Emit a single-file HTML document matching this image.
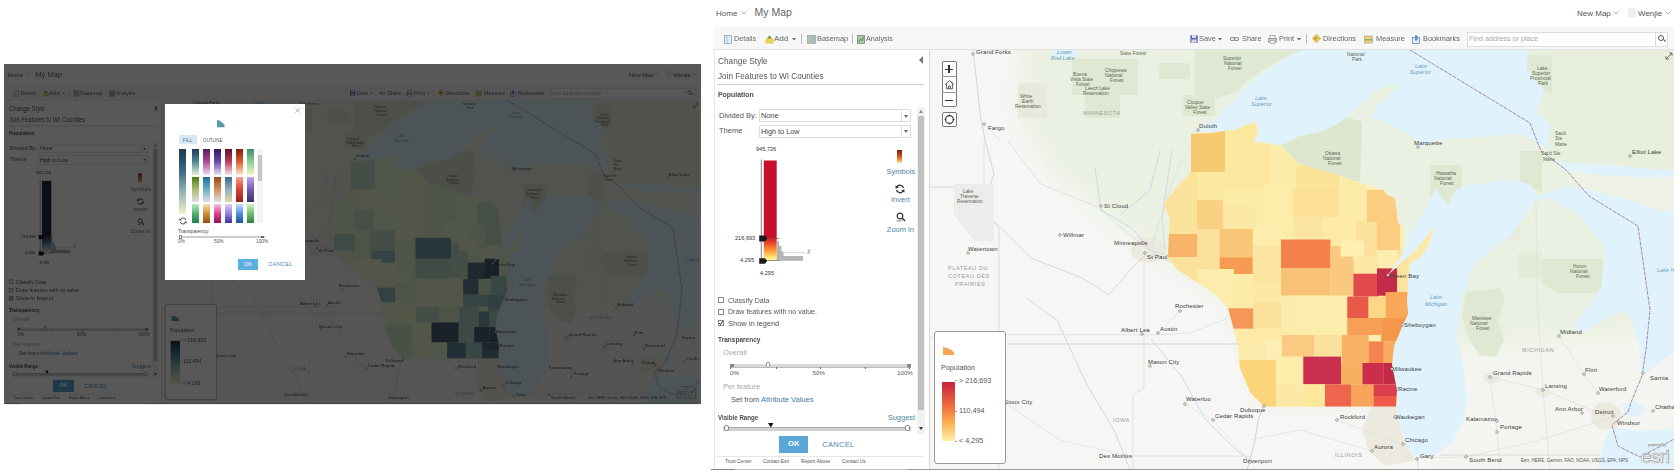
<!DOCTYPE html>
<html><head><meta charset="utf-8"><style>
html,body{margin:0;padding:0;background:#fff}
body{width:1680px;height:475px;position:relative;overflow:hidden;font-family:'Liberation Sans', sans-serif}
</style></head><body>
<div style="position:absolute;left:714px;top:0;width:960px;height:470px">
<div style="position:absolute;left:0;top:0;width:960px;height:470px;background:#fff;overflow:hidden">
<div style="position:absolute;left:2px;top:9.50px;font-size:8px;line-height:8px;color:#555;font-weight:normal;white-space:nowrap;">Home</div>
<svg style="position:absolute;left:26.5px;top:11px" width="6" height="4"><polyline points="0.5,0.5 3,3 5.5,0.5" fill="none" stroke="#999" stroke-width="0.8"/></svg>
<div style="position:absolute;left:40.5px;top:7.38px;font-size:10.5px;line-height:10.5px;color:#666;font-weight:normal;white-space:nowrap;">My Map</div>
<div style="position:absolute;left:863px;top:9.50px;font-size:8px;line-height:8px;color:#555;font-weight:normal;white-space:nowrap;">New Map</div>
<svg style="position:absolute;left:899px;top:11px" width="6" height="4"><polyline points="0.5,0.5 3,3 5.5,0.5" fill="none" stroke="#999" stroke-width="0.8"/></svg>
<div style="position:absolute;left:914px;top:8px;width:7.5px;height:9px;background:#eeeeee"></div>
<div style="position:absolute;left:924px;top:9.50px;font-size:8px;line-height:8px;color:#555;font-weight:normal;white-space:nowrap;">Wenjie</div>
<svg style="position:absolute;left:951px;top:11px" width="6" height="4"><polyline points="0.5,0.5 3,3 5.5,0.5" fill="none" stroke="#999" stroke-width="0.8"/></svg>
<div style="position:absolute;left:0;top:27px;width:960px;height:23px;background:#f7f7f7;border-bottom:1px solid #e2e2e2;box-sizing:border-box"></div>
<svg style="position:absolute;left:10px;top:34.5px" width="8" height="9" viewBox="0 0 8 9"><rect x="0.5" y="0.5" width="7" height="8" fill="#e3edf3" stroke="#8fa6b8" stroke-width="0.8"/><line x1="3" y1="1" x2="3" y2="8" stroke="#8fa6b8" stroke-width="0.6"/></svg>
<div style="position:absolute;left:20px;top:34.90px;font-size:8px;line-height:8px;color:#666;font-weight:normal;white-space:nowrap;transform:scaleX(0.9);transform-origin:0 0;">Details</div>
<svg style="position:absolute;left:51px;top:34.5px" width="9" height="9" viewBox="0 0 9 9"><rect x="0.5" y="3.5" width="8" height="5" fill="#e6d44e"/><polygon points="4.5,0.5 7,3.5 2,3.5" fill="#6a8a3a"/></svg>
<div style="position:absolute;left:60px;top:34.90px;font-size:8px;line-height:8px;color:#666;font-weight:normal;white-space:nowrap;">Add</div>
<svg style="position:absolute;left:78px;top:38px" width="5" height="3" viewBox="0 0 5 3"><polygon points="0,0 4,0 2,2.5" fill="#666"/></svg>
<div style="position:absolute;left:87px;top:34px;width:1px;height:10px;background:#bbb;border:none;box-sizing:border-box"></div>
<svg style="position:absolute;left:93px;top:34.5px" width="9" height="9" viewBox="0 0 9 9"><rect x="0.5" y="0.5" width="3.5" height="8" fill="#b8c4a8" stroke="#8a9488" stroke-width="0.6"/><rect x="5" y="0.5" width="3.5" height="8" fill="#aebccc" stroke="#8a9488" stroke-width="0.6"/></svg>
<div style="position:absolute;left:103px;top:34.90px;font-size:8px;line-height:8px;color:#666;font-weight:normal;white-space:nowrap;transform:scaleX(0.92);transform-origin:0 0;">Basemap</div>
<div style="position:absolute;left:138px;top:34px;width:1px;height:10px;background:#bbb;border:none;box-sizing:border-box"></div>
<svg style="position:absolute;left:143px;top:34.5px" width="8" height="9" viewBox="0 0 8 9"><rect x="0.5" y="0.5" width="7" height="8" fill="#a8cc98" stroke="#778" stroke-width="0.7"/><polyline points="1.5,7 3.5,4 5,5.5 7,2" fill="none" stroke="#3a6a9a" stroke-width="0.8"/></svg>
<div style="position:absolute;left:152px;top:34.90px;font-size:8px;line-height:8px;color:#666;font-weight:normal;white-space:nowrap;transform:scaleX(0.9);transform-origin:0 0;">Analysis</div>
<svg style="position:absolute;left:475.5px;top:35px" width="8" height="8" viewBox="0 0 8 8"><rect x="0.3" y="0.3" width="7.4" height="7.4" fill="#6468b0"/><rect x="2" y="0.3" width="4" height="2.5" fill="#e8e8f4"/><rect x="1.5" y="4.5" width="5" height="3" fill="#d8d8ea"/></svg>
<div style="position:absolute;left:485px;top:34.90px;font-size:8px;line-height:8px;color:#666;font-weight:normal;white-space:nowrap;transform:scaleX(0.92);transform-origin:0 0;">Save</div>
<svg style="position:absolute;left:503.5px;top:38px" width="5" height="3" viewBox="0 0 5 3"><polygon points="0,0 4,0 2,2.5" fill="#666"/></svg>
<svg style="position:absolute;left:516px;top:37px" width="9" height="4" viewBox="0 0 9 4"><rect x="0.4" y="0.4" width="4.5" height="3.2" rx="1.5" fill="none" stroke="#777" stroke-width="0.9"/><rect x="4" y="0.4" width="4.5" height="3.2" rx="1.5" fill="none" stroke="#777" stroke-width="0.9"/></svg>
<div style="position:absolute;left:528px;top:34.90px;font-size:8px;line-height:8px;color:#666;font-weight:normal;white-space:nowrap;transform:scaleX(0.92);transform-origin:0 0;">Share</div>
<svg style="position:absolute;left:554px;top:34.5px" width="9" height="9" viewBox="0 0 9 9"><rect x="2" y="0.5" width="5" height="3" fill="#fff" stroke="#888" stroke-width="0.7"/><rect x="0.5" y="3.5" width="8" height="3.5" fill="#ccc" stroke="#888" stroke-width="0.7"/><rect x="2" y="6" width="5" height="2.5" fill="#fff" stroke="#888" stroke-width="0.6"/></svg>
<div style="position:absolute;left:565px;top:34.90px;font-size:8px;line-height:8px;color:#666;font-weight:normal;white-space:nowrap;transform:scaleX(0.92);transform-origin:0 0;">Print</div>
<svg style="position:absolute;left:583px;top:38px" width="5" height="3" viewBox="0 0 5 3"><polygon points="0,0 4,0 2,2.5" fill="#666"/></svg>
<div style="position:absolute;left:592px;top:34px;width:1px;height:10px;background:#bbb;border:none;box-sizing:border-box"></div>
<svg style="position:absolute;left:598px;top:34px" width="9" height="9" viewBox="0 0 9 9"><polygon points="4.5,0.3 8.7,4.5 4.5,8.7 0.3,4.5" fill="#e8c84a" stroke="#b89a2a" stroke-width="0.5"/><polyline points="3,5.5 3,4 5.5,4" fill="none" stroke="#6a5a1a" stroke-width="0.7"/></svg>
<div style="position:absolute;left:609px;top:34.90px;font-size:8px;line-height:8px;color:#666;font-weight:normal;white-space:nowrap;transform:scaleX(0.93);transform-origin:0 0;">Directions</div>
<svg style="position:absolute;left:650px;top:34.5px" width="9" height="9" viewBox="0 0 9 9"><rect x="0.5" y="1" width="8" height="7" fill="#e8d08a" stroke="#b89a5a" stroke-width="0.6"/><rect x="0.5" y="4" width="8" height="1.5" fill="#8ab86a"/></svg>
<div style="position:absolute;left:662px;top:34.90px;font-size:8px;line-height:8px;color:#666;font-weight:normal;white-space:nowrap;transform:scaleX(0.93);transform-origin:0 0;">Measure</div>
<svg style="position:absolute;left:698px;top:34.5px" width="8" height="9" viewBox="0 0 8 9"><rect x="0.5" y="2.5" width="7" height="6" fill="#e8f0f8" stroke="#5a8ac0" stroke-width="0.8"/><rect x="3" y="0.5" width="2.5" height="5" fill="#5a8ac0"/></svg>
<div style="position:absolute;left:709px;top:34.90px;font-size:8px;line-height:8px;color:#666;font-weight:normal;white-space:nowrap;transform:scaleX(0.92);transform-origin:0 0;">Bookmarks</div>
<div style="position:absolute;left:753px;top:31.5px;width:201px;height:15px;background:#fff;border:1px solid #ddd;box-sizing:border-box"></div>
<div style="position:absolute;left:941px;top:31.5px;width:1px;height:15px;background:#ddd"></div>
<div style="position:absolute;left:755px;top:35.38px;font-size:7.2px;line-height:7.2px;color:#aaa;font-weight:normal;white-space:nowrap;">Find address or place</div>
<div style="position:absolute;left:944px;top:34.5px;width:6px;height:6px;border:1px solid #555;border-radius:50%;box-sizing:border-box"></div>
<div style="position:absolute;left:948.5px;top:40px;width:3px;height:1px;background:#555;transform:rotate(45deg)"></div>
<svg width="744" height="419" viewBox="930 50 744 419" style="position:absolute;left:216px;top:50px;display:block">
<defs><clipPath id="wiR"><polygon points="1191.0,134.0 1210.0,133.0 1224.0,131.0 1235.0,130.0 1244.0,126.0 1255.0,122.0 1258.0,130.0 1254.0,142.0 1264.0,143.0 1277.0,145.0 1281.0,146.0 1299.0,164.0 1326.0,171.0 1354.0,181.0 1383.0,190.0 1387.0,195.0 1395.0,198.0 1398.0,223.0 1403.0,226.0 1404.0,248.0 1400.0,258.0 1393.0,268.0 1388.0,275.0 1403.0,261.0 1415.0,251.0 1431.0,231.0 1434.0,226.0 1428.0,246.0 1421.0,256.0 1410.0,263.0 1408.0,281.0 1407.0,300.0 1408.0,314.0 1402.0,327.0 1394.0,346.0 1392.0,365.0 1397.0,390.0 1396.0,406.5 1264.0,406.5 1250.0,392.0 1240.0,368.0 1238.0,345.0 1234.0,330.0 1228.0,308.0 1217.0,296.0 1205.0,287.0 1189.0,277.0 1178.0,270.0 1168.0,258.0 1169.0,235.0 1170.0,220.0 1164.0,204.0 1176.0,188.0 1191.0,172.0"/></clipPath></defs>
<filter id="blR" x="-20%" y="-20%" width="140%" height="140%"><feGaussianBlur stdDeviation="10"/></filter>
<rect x="900" y="30" width="800" height="470" fill="#ebf1e2"/>
<polygon fill="#e7eedb" filter="url(#blR)" points="1530.0,40.0 1700.0,40.0 1700.0,172.0 1560.0,165.0 1550.0,145.0 1545.0,95.0 1530.0,70.0"/>
<polygon fill="#f6f6f4" filter="url(#blR)" points="880.0,20.0 1025.0,20.0 1015.0,110.0 1050.0,170.0 1110.0,220.0 1165.0,262.0 1230.0,300.0 1260.0,400.0 1440.0,410.0 1440.0,520.0 880.0,520.0"/>
<polygon fill="#f4f5f0" filter="url(#blR)" points="1430.0,350.0 1700.0,330.0 1700.0,520.0 1430.0,520.0"/>
<polygon fill="#dfe8d2" points="1195.0,50.0 1303.0,50.0 1285.0,57.0 1265.0,69.0 1248.0,80.0 1236.0,92.0 1215.0,99.0 1195.0,99.0"/>
<polygon fill="#dfe8d2" points="1159.0,63.0 1190.0,63.0 1190.0,79.0 1159.0,79.0"/>
<polygon fill="#dfe8d2" points="1072.0,59.0 1138.0,59.0 1138.0,95.0 1120.0,95.0 1120.0,118.0 1085.0,118.0 1085.0,95.0 1072.0,95.0"/>
<polygon fill="#e6e9dc" points="1018.0,83.0 1047.0,83.0 1047.0,118.0 1018.0,118.0"/>
<polygon fill="#dfe8d2" points="1183.0,95.0 1215.0,95.0 1215.0,116.0 1183.0,116.0"/>
<polygon fill="#d5e2c2" points="1333.0,50.0 1358.0,50.0 1356.0,56.0 1335.0,56.0"/>
<polygon fill="#dde6cf" points="1281.0,146.0 1290.0,140.0 1307.0,131.0 1331.0,120.0 1347.0,117.0 1362.0,122.0 1360.0,181.0 1354.0,181.0 1326.0,171.0 1299.0,164.0"/>
<polygon fill="#dfe8d2" points="1520.0,151.0 1542.0,151.0 1542.0,192.0 1520.0,185.0"/>
<polygon fill="#dfe8d2" points="1430.0,165.0 1462.0,165.0 1462.0,197.0 1448.0,205.0 1430.0,198.0"/>
<polygon fill="#dfe8d2" points="1527.0,55.0 1552.0,55.0 1552.0,95.0 1544.0,90.0 1527.0,70.0"/>
<polygon fill="#dfe8d2" points="1466.0,292.0 1500.0,288.0 1505.0,300.0 1498.0,320.0 1504.0,340.0 1496.0,357.0 1480.0,355.0 1468.0,338.0 1462.0,315.0"/>
<polygon fill="#e4ebd9" points="1518.0,253.0 1542.0,253.0 1542.0,278.0 1518.0,278.0"/>
<polygon fill="#dfe8d2" points="1542.0,259.0 1603.0,259.0 1603.0,293.0 1560.0,293.0 1542.0,285.0"/>
<polygon fill="#e8ecdf" points="1500.0,215.0 1520.0,215.0 1520.0,240.0 1500.0,240.0"/>
<ellipse cx="1148" cy="250" rx="17" ry="13" fill="#ece9df"/>
<polygon fill="#ece9df" points="1372.0,406.0 1397.0,406.0 1397.0,414.0 1401.0,431.0 1408.0,448.0 1416.0,460.0 1385.0,466.0 1368.0,450.0 1362.0,428.0"/>
<ellipse cx="1606" cy="416" rx="15" ry="14" fill="#ece9df"/>
<ellipse cx="1492" cy="378" rx="8" ry="6" fill="#ebeadf"/>
<ellipse cx="1543" cy="392" rx="8" ry="5" fill="#ebeadf"/>
<polyline fill="none" stroke="#cdcdcd" stroke-width="0.8" points="1000.0,344.0 1240.0,344.0"/>
<polyline fill="none" stroke="#cdcdcd" stroke-width="0.7" points="930.0,187.0 994.0,187.0"/>
<polyline fill="none" stroke="#d6d6d6" stroke-width="0.6" points="984.0,140.0 984.0,187.0"/>
<polyline fill="none" stroke="#d2d2d2" stroke-width="0.7" points="999.0,229.0 999.0,470.0"/>
<polyline fill="none" stroke="#dcdcdc" stroke-width="0.7" points="1000.0,334.7 1160.0,334.7 1190.0,333.0 1228.0,318.0"/>
<polyline fill="none" stroke="#cdcdcd" stroke-width="0.8" points="973.0,50.0 981.0,120.0 986.0,144.0 994.0,174.0 982.0,207.0 999.0,229.0"/>
<polyline fill="none" stroke="#dcdcdc" stroke-width="0.8" points="1007.0,140.0 1041.0,184.0 1098.0,207.0 1104.0,212.0 1130.0,235.0 1150.0,250.0 1220.0,270.0 1280.0,320.0 1340.0,370.0 1392.0,369.0"/>
<polyline fill="none" stroke="#dcdcdc" stroke-width="0.8" points="1144.0,260.0 1144.0,388.0 1133.0,395.0 1133.0,470.0"/>
<polyline fill="none" stroke="#dcdcdc" stroke-width="0.7" points="1198.0,130.0 1175.0,175.0 1160.0,220.0 1150.0,250.0"/>
<polyline fill="none" stroke="#dcdcdc" stroke-width="0.7" points="1130.0,456.0 1250.0,456.0"/>
<polyline fill="none" stroke="#c8c8c8" stroke-width="0.8" points="1264.0,406.0 1258.0,420.0 1255.0,440.0 1250.0,460.0 1247.0,470.0"/>
<polyline fill="none" stroke="#cccccc" stroke-width="0.7" points="1418.0,458.0 1418.0,470.0"/>
<polyline fill="none" stroke="#cccccc" stroke-width="0.7" points="1440.0,455.0 1600.0,455.0"/>
<polyline fill="none" stroke="#dcdcdc" stroke-width="0.7" points="1337.0,420.0 1400.0,444.0"/>
<polyline fill="none" stroke="#dcdcdc" stroke-width="0.7" points="1250.0,440.0 1300.0,430.0 1372.0,451.0"/>
<polyline fill="none" stroke="#dcdcdc" stroke-width="0.7" points="1416.0,458.0 1466.0,457.0 1540.0,440.0 1610.0,418.0"/>
<polyline fill="none" stroke="#dcdcdc" stroke-width="0.7" points="1490.0,377.0 1543.0,390.0 1606.0,416.0"/>
<polyline fill="none" stroke="#dcdcdc" stroke-width="0.6" points="984.0,124.0 1000.0,140.0"/>
<polyline fill="none" stroke="#dcdcdc" stroke-width="0.6" points="1004.0,402.0 1060.0,440.0 1128.0,456.0"/>
<polyline fill="none" stroke="#dcdcdc" stroke-width="0.6" points="1185.0,404.0 1213.0,420.0 1250.0,462.0"/>
<polyline fill="none" stroke="#dcdcdc" stroke-width="0.6" points="1536.0,199.0 1537.0,300.0 1543.0,390.0 1550.0,470.0"/>
<polyline fill="none" stroke="#dcdcdc" stroke-width="0.6" points="1490.0,377.0 1497.0,432.0 1500.0,470.0"/>
<polyline fill="none" stroke="#dcdcdc" stroke-width="0.6" points="1559.0,336.0 1584.0,374.0 1598.0,393.0"/>
<polyline fill="none" stroke="#dcdcdc" stroke-width="0.6" points="1180.0,311.0 1158.0,333.0"/>
<polyline fill="none" stroke="#dcdcdc" stroke-width="0.6" points="930.0,337.0 1000.0,334.7"/>
<polyline fill="none" stroke="#b3d3e8" stroke-width="0.7" points="984.0,211.0 1031.0,258.0 1082.0,278.0 1109.0,295.0 1130.0,270.0 1145.0,255.0"/>
<polyline fill="none" stroke="#b3d3e8" stroke-width="0.7" points="1095.0,167.0 1101.0,210.0 1132.0,228.0 1150.0,250.0 1170.0,262.0"/>
<polyline fill="none" stroke="#b3d3e8" stroke-width="0.7" points="1026.0,298.0 1057.0,320.0 1087.0,385.0 1114.0,430.0 1125.0,457.0 1130.0,470.0"/>
<polyline fill="none" stroke="#b3d3e8" stroke-width="0.7" points="1151.0,339.0 1182.0,377.0 1205.0,419.0 1235.0,449.0 1250.0,460.0"/>
<polyline fill="none" stroke="#b3d3e8" stroke-width="0.7" points="1172.0,150.0 1162.0,217.0 1165.0,250.0"/>
<polyline fill="none" stroke="#b3d3e8" stroke-width="0.7" points="1160.0,150.0 1150.0,190.0 1120.0,215.0"/>
<polygon fill="#ececea" points="954.0,184.0 994.0,184.0 994.0,241.0 975.0,241.0 954.0,215.0"/>
<polygon fill="#e0f3fd" points="1199.0,128.0 1212.0,121.0 1222.0,112.0 1238.0,96.0 1252.0,81.0 1272.0,67.0 1290.0,56.0 1305.0,49.0 1528.0,49.0 1527.0,70.0 1544.0,90.0 1536.0,112.0 1552.0,126.0 1547.0,140.0 1553.0,150.0 1541.0,145.0 1522.0,134.0 1500.0,135.0 1470.0,138.0 1440.0,140.0 1422.0,147.0 1413.0,137.0 1395.0,127.0 1380.0,120.0 1369.0,117.0 1380.0,103.0 1391.0,94.0 1399.0,85.0 1388.0,86.0 1374.0,92.0 1360.0,105.0 1347.0,117.0 1335.0,125.0 1324.0,131.0 1310.0,134.0 1297.0,137.0 1287.0,143.0 1277.0,145.0 1264.0,143.0 1254.0,142.0 1258.0,130.0 1255.0,122.0 1244.0,126.0 1235.0,130.0 1224.0,131.0 1210.0,133.0"/>
<polygon fill="#e0f3fd" points="1537.0,197.0 1531.0,185.0 1518.0,181.0 1506.0,179.0 1480.0,184.0 1466.0,185.0 1456.0,190.0 1448.0,205.0 1443.0,200.0 1436.0,188.0 1431.0,198.0 1423.0,213.0 1410.0,233.0 1404.0,248.0 1400.0,258.0 1393.0,268.0 1388.0,275.0 1403.0,261.0 1415.0,251.0 1431.0,231.0 1434.0,226.0 1428.0,246.0 1421.0,256.0 1410.0,263.0 1408.0,281.0 1407.0,300.0 1408.0,314.0 1402.0,327.0 1394.0,346.0 1392.0,365.0 1397.0,390.0 1396.0,406.0 1397.0,414.0 1401.0,431.0 1408.0,448.0 1416.0,458.0 1436.0,455.0 1452.0,442.0 1464.0,420.0 1467.0,400.0 1464.0,371.0 1457.0,336.0 1459.0,315.0 1462.0,300.0 1467.0,287.0 1471.0,272.0 1476.0,263.0 1491.0,250.0 1508.0,238.0 1522.0,220.0 1532.0,205.0"/>
<polygon fill="#e0f3fd" points="1527.0,202.0 1536.0,196.0 1550.0,192.0 1565.0,186.0 1580.0,188.0 1600.0,193.0 1630.0,200.0 1660.0,210.0 1680.0,212.0 1680.0,352.0 1674.0,352.0 1642.0,376.0 1639.0,344.0 1632.0,320.0 1625.0,310.0 1608.0,317.0 1588.0,330.0 1574.0,330.0 1576.0,322.0 1588.0,308.0 1601.0,288.0 1605.0,259.0 1603.0,245.0 1596.0,237.0 1578.0,214.0 1548.0,198.0"/>
<polygon fill="#e0f3fd" points="1553.0,152.0 1558.0,160.0 1567.0,163.0 1612.0,165.0 1659.0,170.0 1680.0,171.0 1680.0,178.0 1640.0,178.0 1600.0,176.0 1575.0,172.0 1562.0,168.0"/>
<polygon fill="#e0f3fd" points="1598.0,470.0 1603.0,443.0 1613.0,427.0 1637.0,431.0 1671.0,429.0 1680.0,428.0 1680.0,470.0"/>
<polygon fill="#e0f3fd" points="1623.0,404.0 1633.0,401.0 1643.0,405.0 1644.0,413.0 1634.0,417.0 1624.0,414.0"/>
<polygon fill="#e0f3fd" points="1051.0,49.0 1078.0,49.0 1077.0,56.0 1060.0,58.0 1052.0,55.0"/>
<polygon fill="#eef2e6" points="1572.0,171.0 1600.0,175.0 1640.0,177.0 1680.0,177.0 1680.0,212.0 1660.0,210.0 1630.0,200.0 1600.0,193.0 1580.0,188.0 1565.0,180.0"/>
<g clip-path="url(#wiR)">
<rect x="1150" y="110" width="300" height="310" fill="#fdedae"/>
<rect x="1160" y="120" width="65.0" height="52.0" fill="#f7ca72"/>
<rect x="1225" y="110" width="45.0" height="80.0" fill="#fce89f"/>
<rect x="1270" y="130" width="26.0" height="60.0" fill="#fcecaa"/>
<rect x="1296" y="130" width="34.0" height="38.0" fill="#fceaa6"/>
<rect x="1296" y="166" width="44.0" height="24.0" fill="#fce39a"/>
<rect x="1160" y="172" width="37.0" height="62.0" fill="#fbe39c"/>
<rect x="1197" y="172" width="28.0" height="28.0" fill="#fce9a2"/>
<rect x="1225" y="190" width="39.0" height="38.0" fill="#fdeba8"/>
<rect x="1264" y="185" width="32.0" height="37.0" fill="#fdedab"/>
<rect x="1293" y="188" width="46.0" height="29.0" fill="#fce098"/>
<rect x="1339" y="180" width="28.0" height="45.0" fill="#fceaa8"/>
<rect x="1367" y="190" width="33.0" height="60.0" fill="#facd80"/>
<rect x="1197" y="200" width="26.0" height="29.0" fill="#fad182"/>
<rect x="1223" y="205" width="32.0" height="24.0" fill="#fce8a5"/>
<rect x="1255" y="222" width="38.0" height="20.0" fill="#fdecab"/>
<rect x="1293" y="217" width="29.0" height="23.0" fill="#fce5a3"/>
<rect x="1322" y="217" width="18.0" height="29.0" fill="#fdeaa9"/>
<rect x="1340" y="225" width="16.0" height="16.0" fill="#fdeaa9"/>
<rect x="1356" y="222" width="21.0" height="46.0" fill="#fce19c"/>
<rect x="1160" y="234" width="9.0" height="26.0" fill="#fce19b"/>
<rect x="1168" y="234" width="29.0" height="23.0" fill="#f8b468"/>
<rect x="1160" y="257" width="40.0" height="33.0" fill="#fce19b"/>
<rect x="1197" y="229" width="23.0" height="40.0" fill="#fce19c"/>
<rect x="1219.7" y="228.8" width="33.1" height="28.4" fill="#fac77a"/>
<rect x="1219.7" y="257.2" width="33.1" height="16.8" fill="#f69c52"/>
<rect x="1197" y="269" width="37.0" height="41.0" fill="#fdedac"/>
<rect x="1234" y="274" width="19.0" height="34.0" fill="#fdeba8"/>
<rect x="1252.8" y="245.8" width="28.2" height="39.8" fill="#fce4a1"/>
<rect x="1253" y="285.6" width="28.0" height="16.4" fill="#fde8a8"/>
<rect x="1281" y="239.5" width="49.5" height="28.9" fill="#f4804c"/>
<rect x="1281" y="268.4" width="49.5" height="27.3" fill="#f9c175"/>
<rect x="1330.5" y="246" width="23.2" height="49.7" fill="#fac97f"/>
<rect x="1340.5" y="240.8" width="23.5" height="15.8" fill="#fdf0b1"/>
<rect x="1353.7" y="256.6" width="24.8" height="17.4" fill="#fce8a6"/>
<rect x="1353.4" y="273.7" width="25.1" height="22.9" fill="#e04a4c"/>
<rect x="1377" y="268.4" width="20.3" height="27.3" fill="#c42b4a"/>
<rect x="1397" y="250" width="43.0" height="50.0" fill="#fce39e"/>
<rect x="1408" y="222" width="32.0" height="48.0" fill="#fce9a8"/>
<rect x="1228" y="308.3" width="25.3" height="20.5" fill="#f6975a"/>
<rect x="1253.3" y="302" width="27.7" height="26.8" fill="#fce19d"/>
<rect x="1281" y="295.7" width="18.8" height="39.3" fill="#fcecab"/>
<rect x="1299.8" y="295.7" width="47.4" height="39.3" fill="#fdedac"/>
<rect x="1347.2" y="296.6" width="21.4" height="21.4" fill="#e85a48"/>
<rect x="1368.6" y="296.6" width="17.0" height="21.4" fill="#fbd888"/>
<rect x="1385.6" y="292" width="34.4" height="26.0" fill="#f8a858"/>
<rect x="1347.2" y="318" width="34.0" height="17.0" fill="#f5a055"/>
<rect x="1381.2" y="318" width="38.8" height="23.4" fill="#f5964b"/>
<rect x="1220" y="328.8" width="45.8" height="17.0" fill="#fde9a8"/>
<rect x="1265.8" y="328.8" width="16.1" height="11.7" fill="#fde9a8"/>
<rect x="1265.8" y="340.5" width="16.1" height="19.5" fill="#fdefb4"/>
<rect x="1281.9" y="335" width="32.1" height="21.6" fill="#faca82"/>
<rect x="1314" y="335" width="27.8" height="21.6" fill="#fce19c"/>
<rect x="1341.8" y="335" width="26.8" height="28.0" fill="#f9b265"/>
<rect x="1368.6" y="341.4" width="15.2" height="21.6" fill="#f6844f"/>
<rect x="1383.8" y="341.4" width="36.2" height="21.6" fill="#f9ac5f"/>
<rect x="1220" y="345.8" width="45.8" height="26.2" fill="#fdebab"/>
<rect x="1220" y="360" width="56.0" height="50.0" fill="#fcd47a"/>
<rect x="1276" y="356.6" width="27.3" height="28.4" fill="#fdecaa"/>
<rect x="1276" y="385" width="27.0" height="25.0" fill="#fce9a8"/>
<rect x="1303.3" y="356.6" width="37.7" height="27.7" fill="#c8304d"/>
<rect x="1303" y="384.3" width="22.0" height="25.7" fill="#fce79d"/>
<rect x="1325" y="384.3" width="26.0" height="25.7" fill="#ee644c"/>
<rect x="1341" y="363" width="21.4" height="21.3" fill="#f8b060"/>
<rect x="1351" y="384.3" width="22.5" height="25.7" fill="#f8a45a"/>
<rect x="1362.4" y="363" width="21.4" height="21.3" fill="#c92f4a"/>
<rect x="1383.8" y="363" width="36.2" height="21.3" fill="#c42a48"/>
<rect x="1373.5" y="384.3" width="46.5" height="11.7" fill="#dc3e4e"/>
<rect x="1373.5" y="396" width="46.5" height="14.0" fill="#f05a48"/>
</g>
<polyline fill="none" stroke="#a487b0" stroke-width="1" stroke-dasharray="4,1" points="1410.0,50.0 1530.0,123.0 1541.0,151.0 1566.0,170.0 1589.0,196.0 1638.0,226.0 1650.0,310.0 1646.0,350.0 1642.0,376.0 1632.0,400.0 1628.0,412.0 1612.0,425.0 1618.0,446.0 1640.0,457.0 1680.0,436.0"/>
<g font-family="Liberation Sans, sans-serif" font-size="6" fill="#3a3a3a" letter-spacing="0.15">
<text x="976" y="54">Grand Forks</text>
<text x="988" y="130">Fargo</text>
<text x="1104" y="208">St Cloud</text>
<text x="1063" y="237">Willmar</text>
<text x="1114" y="245">Minneapolis</text>
<text x="1147" y="259">St Paul</text>
<text x="968" y="251">Watertown</text>
<text x="1175" y="308">Rochester</text>
<text x="1121" y="332">Albert Lea</text>
<text x="1160" y="331">Austin</text>
<text x="1148" y="364">Mason City</text>
<text x="1004" y="404">Sioux City</text>
<text x="1186" y="401">Waterloo</text>
<text x="1099" y="458">Des Moines</text>
<text x="1215" y="418">Cedar Rapids</text>
<text x="1240" y="412">Dubuque</text>
<text x="1243" y="463">Davenport</text>
<text x="1199" y="128">Duluth</text>
<text x="1414" y="145">Marquette</text>
<text x="1632" y="154">Elliot Lake</text>
<text x="1404" y="327">Sheboygan</text>
<text x="1392" y="371">Milwaukee</text>
<text x="1398" y="391">Racine</text>
<text x="1395" y="419">Waukegan</text>
<text x="1405" y="442">Chicago</text>
<text x="1420" y="458">Gary</text>
<text x="1469" y="462">South Bend</text>
<text x="1374" y="449">Aurora</text>
<text x="1340" y="419">Rockford</text>
<text x="1560" y="334">Midland</text>
<text x="1493" y="375">Grand Rapids</text>
<text x="1585" y="372">Flint</text>
<text x="1545" y="388">Lansing</text>
<text x="1599" y="391">Waterford</text>
<text x="1555" y="411">Ann Arbor</text>
<text x="1595" y="414">Detroit</text>
<text x="1617" y="425">Windsor</text>
<text x="1466" y="421">Kalamazoo</text>
<text x="1500" y="429">Portage</text>
<text x="1650" y="380">Sarnia</text>
<text x="1655" y="409">Chatham</text>
<text x="1389" y="278">Green Bay</text>
</g>
<g fill="#fff" stroke="#666" stroke-width="0.6">
<circle cx="973" cy="54" r="1.3"/>
<circle cx="984" cy="124" r="1.3"/>
<circle cx="1101" cy="206" r="1.3"/>
<circle cx="1060" cy="235" r="1.3"/>
<circle cx="1143" cy="243" r="1.3"/>
<circle cx="1145" cy="253" r="1.3"/>
<circle cx="968" cy="253" r="1.3"/>
<circle cx="1180" cy="311" r="1.3"/>
<circle cx="1142" cy="334" r="1.3"/>
<circle cx="1158" cy="333" r="1.3"/>
<circle cx="1150" cy="366" r="1.3"/>
<circle cx="1001" cy="402" r="1.3"/>
<circle cx="1185" cy="404" r="1.3"/>
<circle cx="1126" cy="456" r="1.3"/>
<circle cx="1213" cy="420" r="1.3"/>
<circle cx="1264" cy="406" r="1.3"/>
<circle cx="1250" cy="462" r="1.3"/>
<circle cx="1198" cy="130" r="1.3"/>
<circle cx="1418" cy="147" r="1.3"/>
<circle cx="1630" cy="156" r="1.3"/>
<circle cx="1402" cy="325" r="1.3"/>
<circle cx="1392" cy="369" r="1.3"/>
<circle cx="1398" cy="389" r="1.3"/>
<circle cx="1395" cy="417" r="1.3"/>
<circle cx="1403" cy="444" r="1.3"/>
<circle cx="1417" cy="459" r="1.3"/>
<circle cx="1466" cy="457" r="1.3"/>
<circle cx="1372" cy="451" r="1.3"/>
<circle cx="1337" cy="420" r="1.3"/>
<circle cx="1559" cy="336" r="1.3"/>
<circle cx="1490" cy="377" r="1.3"/>
<circle cx="1584" cy="374" r="1.3"/>
<circle cx="1543" cy="390" r="1.3"/>
<circle cx="1598" cy="393" r="1.3"/>
<circle cx="1582" cy="413" r="1.3"/>
<circle cx="1613" cy="416" r="1.3"/>
<circle cx="1643" cy="373" r="1.3"/>
<circle cx="1497" cy="421" r="1.3"/>
<circle cx="1497" cy="432" r="1.3"/>
<circle cx="1653" cy="411" r="1.3"/>
<circle cx="1388" cy="275" r="1.3"/>
</g>
<g font-family="Liberation Sans, sans-serif" font-size="5.5" font-style="italic" fill="#6c9cc0">
<text x="1057" y="54">Lower</text>
<text x="1051" y="59.5">Red Lake</text>
<text x="1255" y="100">Lake</text>
<text x="1251" y="106">Superior</text>
<text x="1415" y="68">Lake</text>
<text x="1410" y="74">Superior</text>
<text x="1430" y="299">Lake</text>
<text x="1425" y="306">Michigan</text>
<text x="1657" y="272">Lake Hu</text>
</g>
<g font-family="Liberation Sans, sans-serif" font-size="4.8" fill="#5b6655">
<text x="1223" y="60">Superior</text>
<text x="1224" y="65">National</text>
<text x="1228" y="70">Forest</text>
<text x="1347" y="56">National</text>
<text x="1352" y="61">Park</text>
<text x="1187" y="104">Cloquet</text>
<text x="1185" y="109">Valley State</text>
<text x="1193" y="114">Forest</text>
<text x="1537" y="70">Lake</text>
<text x="1532" y="75">Superior</text>
<text x="1530" y="80">Provincial</text>
<text x="1538" y="85">Park</text>
<text x="1325" y="155">Ottawa</text>
<text x="1323" y="160">National</text>
<text x="1328" y="165">Forest</text>
<text x="1436" y="175">Hiawatha</text>
<text x="1434" y="180">National</text>
<text x="1440" y="185">Forest</text>
<text x="1573" y="268">Huron</text>
<text x="1570" y="273">National</text>
<text x="1576" y="278">Forest</text>
<text x="1472" y="320">Manistee</text>
<text x="1470" y="325">National</text>
<text x="1476" y="330">Forest</text>
<text x="1073" y="76">Buena</text>
<text x="1070" y="81">Vista State</text>
<text x="1076" y="86">Forest</text>
<text x="1105" y="72">Chippewa</text>
<text x="1105" y="77">National</text>
<text x="1110" y="82">Forest</text>
<text x="1085" y="90">Leech Lake</text>
<text x="1083" y="95">Reservation</text>
<text x="1020" y="98">White</text>
<text x="1022" y="103">Earth</text>
<text x="1015" y="108">Reservation</text>
<text x="963" y="193">Lake</text>
<text x="960" y="198">Traverse</text>
<text x="957" y="203">Reservation</text>
<text x="1120" y="55">State Forest</text>
<text x="1555" y="135">Sault</text>
<text x="1555" y="140">Ste</text>
<text x="1555" y="146">Marie</text>
<text x="1541" y="155">Sault Ste</text>
<text x="1543" y="161">Marie</text>
</g>
<g font-family="Liberation Sans, sans-serif" font-size="5.5" fill="#9a9a9a" letter-spacing="0.6">
<text x="1083" y="115">MINNESOTA</text>
<text x="1113" y="422">IOWA</text>
<text x="1335" y="457">ILLINOIS</text>
<text x="1522" y="352">MICHIGAN</text>
<text x="948" y="270">PLATEAU DU</text>
<text x="948" y="278">COTEAU DES</text>
<text x="955" y="286">PRAIRIES</text>
</g>
<text x="1521" y="462" font-family="Liberation Sans, sans-serif" font-size="4.6" fill="#555">Esri, HERE, Garmin, FAO, NOAA, USGS, EPA, NPS</text>
<text x="1640.5" y="462.5" font-family="Liberation Sans, sans-serif" font-size="19" fill="#555" opacity="0.55" transform="translate(0.8,0.8)" letter-spacing="-0.5">esri</text>
<text x="1640.5" y="462.5" font-family="Liberation Sans, sans-serif" font-size="19" fill="#fff" stroke="#888" stroke-width="0.4" letter-spacing="-0.5">esri</text>
<text x="1648" y="446" font-family="Liberation Sans, sans-serif" font-size="3.5" fill="#fff" stroke="#999" stroke-width="0.25">powered by</text>
</svg>
<svg style="position:absolute;left:951px;top:52px" width="8" height="8"><path d="M1 7 L7 1 M4 1 H7 V4 M1 4 V7 H4" fill="none" stroke="#555" stroke-width="0.8"/></svg>
<div style="position:absolute;left:0;top:50px;width:216px;height:419px;background:#fff;border-left:1px solid #e6e6e6;border-right:1px solid #d6d6d6;box-sizing:border-box"></div>
<div style="position:absolute;left:3.7000000000000455px;top:57.35px;font-size:9px;line-height:9px;color:#555;font-weight:normal;white-space:nowrap;transform:scaleX(0.92);transform-origin:0 0;">Change Style</div>
<div style="position:absolute;left:3.7000000000000455px;top:71.75px;font-size:9px;line-height:9px;color:#555;font-weight:normal;white-space:nowrap;transform:scaleX(0.91);transform-origin:0 0;">Join Features to WI Counties</div>
<svg style="position:absolute;left:205px;top:56px" width="5" height="8"><polygon points="4,0 0,4 4,8" fill="#777"/></svg>
<div style="position:absolute;left:3px;top:84px;width:207px;height:1px;background:#ccc"></div>
<div style="position:absolute;left:3.7000000000000455px;top:91.03px;font-size:7.5px;line-height:7.5px;color:#4a4a4a;font-weight:bold;white-space:nowrap;transform:scaleX(0.92);transform-origin:0 0;">Population</div>
<div style="position:absolute;left:5px;top:112.33px;font-size:7.5px;line-height:7.5px;color:#555;font-weight:normal;white-space:nowrap;">Divided By:</div>
<div style="position:absolute;left:5px;top:126.82px;font-size:7.5px;line-height:7.5px;color:#555;font-weight:normal;white-space:nowrap;">Theme</div>
<div style="position:absolute;left:45.39999999999998px;top:109px;width:152px;height:13px;border:1px solid #ddd;box-sizing:border-box;background:#fff"></div>
<div style="position:absolute;left:186.70000000000005px;top:110px;width:1px;height:11px;background:#e2e2e2"></div>
<div style="position:absolute;left:47px;top:112.39px;font-size:7.3px;line-height:7.3px;color:#444;font-weight:normal;white-space:nowrap;">None</div>
<svg style="position:absolute;left:190px;top:114.5px" width="5" height="3"><polygon points="0,0 4,0 2,3" fill="#666"/></svg>
<div style="position:absolute;left:45.39999999999998px;top:124.5px;width:152px;height:13px;border:1px solid #ddd;box-sizing:border-box;background:#fff"></div>
<div style="position:absolute;left:186.70000000000005px;top:125.5px;width:1px;height:11px;background:#e2e2e2"></div>
<div style="position:absolute;left:47px;top:127.89px;font-size:7.3px;line-height:7.3px;color:#444;font-weight:normal;white-space:nowrap;">High to Low</div>
<svg style="position:absolute;left:190px;top:130.0px" width="5" height="3"><polygon points="0,0 4,0 2,3" fill="#666"/></svg>
<div style="position:absolute;left:203px;top:107px;width:8px;height:327px;background:#f1f1f1"></div>
<div style="position:absolute;left:204px;top:116px;width:6px;height:294px;background:#c1c1c1"></div>
<svg style="position:absolute;left:205px;top:109.5px" width="5" height="3"><polygon points="0,3 4,3 2,0" fill="#888"/></svg>
<svg style="position:absolute;left:205px;top:427px" width="5" height="3"><polygon points="0,0 4,0 2,3" fill="#333"/></svg>
<div style="position:absolute;left:42px;top:146.74px;font-size:5.6px;line-height:5.6px;color:#333;font-weight:normal;white-space:nowrap;">945,726</div>
<svg style="position:absolute;left:41px;top:155px" width="60" height="115" viewBox="755 155 60 115">
<defs><linearGradient id="cgwarm" x1="0" y1="0" x2="0" y2="1"><stop offset="0" stop-color="#d81828"/><stop offset="0.3" stop-color="#f0602a"/><stop offset="0.6" stop-color="#f9a83a"/><stop offset="0.85" stop-color="#fde87a"/><stop offset="1" stop-color="#fff3b0"/></linearGradient></defs>
<line x1="761.3" y1="159.5" x2="761.3" y2="263.5" stroke="#666" stroke-width="0.8"/>
<rect x="763.8" y="160.5" width="12.9" height="78" fill="#c8102e"/>
<rect x="763.8" y="238.4" width="12.9" height="22.4" fill="url(#cgwarm)"/>
<polygon points="776.7,241 779,241 779,246 781.5,246 781.5,251.5 783.5,251.5 783.5,256 803,256 803,260.7 776.7,260.7" fill="#b4b4b4"/>
<line x1="783.5" y1="252.7" x2="805" y2="252.7" stroke="#c8c8c8" stroke-width="0.8"/>
<line x1="766" y1="238.4" x2="779.4" y2="238.4" stroke="#7a2a2a" stroke-width="0.6"/>
<line x1="766" y1="260.5" x2="779.4" y2="260.5" stroke="#555" stroke-width="0.6"/>
<polygon points="759.2,235.5 765,235.5 767.2,238.4 765,241.4 759.2,241.4" fill="#1a1a1a"/>
<polygon points="759.2,258.2 765,258.2 767.2,261 765,263.7 759.2,263.7" fill="#1a1a1a"/>
</svg>
<div style="position:absolute;left:93px;top:248.97px;font-size:6.5px;line-height:6.5px;color:#888;font-weight:normal;white-space:nowrap;font-style:italic">x&#772;</div>
<div style="position:absolute;left:21px;top:235.74px;font-size:5.6px;line-height:5.6px;color:#333;font-weight:normal;white-space:nowrap;">216,693</div>
<div style="position:absolute;left:26px;top:257.74px;font-size:5.6px;line-height:5.6px;color:#333;font-weight:normal;white-space:nowrap;">4,295</div>
<div style="position:absolute;left:46px;top:271.24px;font-size:5.6px;line-height:5.6px;color:#333;font-weight:normal;white-space:nowrap;">4,295</div>
<div style="position:absolute;left:183.39999999999998px;top:149.5px;width:5px;height:13.5px;background:linear-gradient(#7c1a12,#c85020 45%,#f7b24a 85%,#fde8b0)"></div>
<div style="position:absolute;left:172.39999999999998px;top:167.93px;font-size:7.5px;line-height:7.5px;color:#4e86a3;font-weight:normal;white-space:nowrap;">Symbols</div>
<svg style="position:absolute;left:181px;top:183.5px" width="10" height="10" viewBox="0 0 10 10"><path d="M8.5 4 A3.6 3.6 0 0 0 1.8 3.2 M1.5 6 A3.6 3.6 0 0 0 8.2 6.8" fill="none" stroke="#333" stroke-width="1.3"/><polygon points="0.5,1.5 3.8,3.6 0.6,4.8" fill="#333"/><polygon points="9.5,8.5 6.2,6.4 9.4,5.2" fill="#333"/></svg>
<div style="position:absolute;left:177px;top:196.32px;font-size:7.5px;line-height:7.5px;color:#4e86a3;font-weight:normal;white-space:nowrap;">Invert</div>
<svg style="position:absolute;left:181.5px;top:212px" width="10" height="10" viewBox="0 0 10 10"><circle cx="4" cy="4" r="2.8" fill="none" stroke="#333" stroke-width="1.2"/><line x1="6" y1="6" x2="9" y2="9" stroke="#333" stroke-width="1.6"/><rect x="0.5" y="8" width="5" height="1.5" fill="#aaa"/></svg>
<div style="position:absolute;left:172.79999999999995px;top:226.32px;font-size:7.5px;line-height:7.5px;color:#4e86a3;font-weight:normal;white-space:nowrap;">Zoom in</div>
<div style="position:absolute;left:4.2999999999999545px;top:297.40000000000003px;width:6px;height:6px;border:1px solid #888;box-sizing:border-box;background:#fff"></div>
<div style="position:absolute;left:14px;top:296.62px;font-size:7.5px;line-height:7.5px;color:#555;font-weight:normal;white-space:nowrap;transform:scaleX(0.94);transform-origin:0 0;">Classify Data</div>
<div style="position:absolute;left:4.2999999999999545px;top:308.6px;width:6px;height:6px;border:1px solid #888;box-sizing:border-box;background:#fff"></div>
<div style="position:absolute;left:14px;top:307.82px;font-size:7.5px;line-height:7.5px;color:#555;font-weight:normal;white-space:nowrap;transform:scaleX(0.94);transform-origin:0 0;">Draw features with no value.</div>
<div style="position:absolute;left:4.2999999999999545px;top:320.40000000000003px;width:6px;height:6px;border:1px solid #888;box-sizing:border-box;background:#fff"></div>
<svg style="position:absolute;left:4.2999999999999545px;top:320.40000000000003px" width="6" height="6"><polyline points="1.2,3 2.5,4.5 4.8,1.2" fill="none" stroke="#222" stroke-width="1"/></svg>
<div style="position:absolute;left:14px;top:319.62px;font-size:7.5px;line-height:7.5px;color:#555;font-weight:normal;white-space:nowrap;">Show in legend</div>
<div style="position:absolute;left:4px;top:335.62px;font-size:7.5px;line-height:7.5px;color:#4a4a4a;font-weight:bold;white-space:nowrap;transform:scaleX(0.87);transform-origin:0 0;">Transparency</div>
<div style="position:absolute;left:9px;top:349.02px;font-size:7.5px;line-height:7.5px;color:#aaa;font-weight:normal;white-space:nowrap;">Overall</div>
<div style="position:absolute;left:15.700000000000045px;top:364px;width:181px;height:2.5px;background:#d8d8d8;border-bottom:0.5px solid #bbb"></div>
<div style="position:absolute;left:15.700000000000045px;top:363.5px;width:4px;height:3px;background:#888"></div>
<div style="position:absolute;left:192.5px;top:363.5px;width:4px;height:3px;background:#888"></div>
<div style="position:absolute;left:52px;top:361.5px;width:4px;height:6px;background:#fff;border:0.8px solid #999;border-radius:0 0 2px 2px;box-sizing:border-box"></div>
<div style="position:absolute;left:16px;top:367px;width:0.6px;height:2px;background:#666"></div>
<div style="position:absolute;left:62px;top:367px;width:0.6px;height:2px;background:#666"></div>
<div style="position:absolute;left:106px;top:367px;width:0.6px;height:2px;background:#666"></div>
<div style="position:absolute;left:151px;top:367px;width:0.6px;height:2px;background:#666"></div>
<div style="position:absolute;left:195px;top:367px;width:0.6px;height:2px;background:#666"></div>
<div style="position:absolute;left:16px;top:370.13px;font-size:6.2px;line-height:6.2px;color:#555;font-weight:normal;white-space:nowrap;">0%</div>
<div style="position:absolute;left:98.5px;top:370.13px;font-size:6.2px;line-height:6.2px;color:#555;font-weight:normal;white-space:nowrap;">50%</div>
<div style="position:absolute;left:183px;top:370.13px;font-size:6.2px;line-height:6.2px;color:#555;font-weight:normal;white-space:nowrap;">100%</div>
<div style="position:absolute;left:9px;top:382.62px;font-size:7.5px;line-height:7.5px;color:#aaa;font-weight:normal;white-space:nowrap;">Per feature</div>
<div style="position:absolute;left:17px;top:396.12px;font-size:7.5px;line-height:7.5px;color:#555;font-weight:normal;white-space:nowrap;">Set from <span style="color:#3f7aa8">Attribute Values</span></div>
<div style="position:absolute;left:3.6000000000000227px;top:414.32px;font-size:7.5px;line-height:7.5px;color:#4a4a4a;font-weight:bold;white-space:nowrap;transform:scaleX(0.82);transform-origin:0 0;">Visible Range</div>
<div style="position:absolute;left:173.70000000000005px;top:414.32px;font-size:7.5px;line-height:7.5px;color:#4e86a3;font-weight:normal;white-space:nowrap;">Suggest</div>
<div style="position:absolute;left:9px;top:427.2px;width:188px;height:2px;background:#d2d2d2;border-top:0.5px solid #aaa;border-bottom:0.5px solid #ccc"></div>
<div style="position:absolute;left:10px;top:424.5px;width:5px;height:6px;background:#fff;border:0.8px solid #888;border-radius:2px;box-sizing:border-box"></div>
<div style="position:absolute;left:191px;top:424.5px;width:5px;height:6px;background:#fff;border:0.8px solid #888;border-radius:2px;box-sizing:border-box"></div>
<svg style="position:absolute;left:53.5px;top:423px" width="6" height="5"><polygon points="0,0 5.5,0 2.75,4.5" fill="#111"/></svg>
<div style="position:absolute;left:65.29999999999995px;top:436.4px;width:29.2px;height:16.5px;background:#5aa6d8;color:#fff;font-size:7.5px;font-weight:bold;line-height:16.5px;text-align:center;letter-spacing:0.3px">OK</div>
<div style="position:absolute;left:108.20000000000005px;top:440.93px;font-size:7.5px;line-height:7.5px;color:#4a88b0;font-weight:normal;white-space:nowrap;letter-spacing:0.3px">CANCEL</div>
<div style="position:absolute;left:2px;top:456px;width:208px;height:1px;background:#e6e6e6"></div>
<div style="position:absolute;left:11px;top:459.92px;font-size:4.8px;line-height:4.8px;color:#555;font-weight:normal;white-space:nowrap;">Trust Center</div>
<div style="position:absolute;left:49px;top:459.92px;font-size:4.8px;line-height:4.8px;color:#555;font-weight:normal;white-space:nowrap;">Contact Esri</div>
<div style="position:absolute;left:87px;top:459.92px;font-size:4.8px;line-height:4.8px;color:#555;font-weight:normal;white-space:nowrap;">Report Abuse</div>
<div style="position:absolute;left:128px;top:459.92px;font-size:4.8px;line-height:4.8px;color:#555;font-weight:normal;white-space:nowrap;">Contact Us</div>
<div style="position:absolute;left:227.5px;top:61px;width:15px;height:46px;background:#fff;border:1px solid #777;border-radius:2px;box-sizing:border-box"></div>
<div style="position:absolute;left:227.5px;top:76px;width:15px;height:1px;background:#999"></div>
<div style="position:absolute;left:227.5px;top:92px;width:15px;height:1px;background:#999"></div>
<div style="position:absolute;left:231px;top:68.5px;width:8px;height:1.2px;background:#333"></div>
<div style="position:absolute;left:234.39999999999998px;top:65px;width:1.2px;height:8px;background:#333"></div>
<div style="position:absolute;left:231px;top:99.5px;width:8px;height:1.2px;background:#333"></div>
<svg style="position:absolute;left:229.5px;top:78.5px" width="11" height="11" viewBox="0 0 11 11"><path d="M1 5.8 L5.5 1.5 L10 5.8 M2.6 4.5 V9.8 H8.4 V4.5 M4.6 9.8 V7 H6.4 V9.8 M7.8 2.5 V4.2" fill="none" stroke="#444" stroke-width="0.85"/></svg>
<div style="position:absolute;left:227.5px;top:111.5px;width:15px;height:15px;background:#fff;border:1px solid #777;border-radius:2px;box-sizing:border-box"></div>
<svg style="position:absolute;left:229.5px;top:113.5px" width="11" height="11" viewBox="0 0 11 11"><circle cx="5.5" cy="5.5" r="3.9" fill="none" stroke="#333" stroke-width="1.1"/><path d="M5.5 0.6 V2.2 M5.5 8.8 V10.4 M0.6 5.5 H2.2 M8.8 5.5 H10.4" stroke="#333" stroke-width="1"/></svg>
<div style="position:absolute;left:220px;top:330.5px;width:72px;height:133px;background:#fff;border:1px solid #9a9a9a;border-radius:3px;box-sizing:border-box"></div>
<svg style="position:absolute;left:229px;top:346.5px" width="12" height="8"><polygon points="0,0 6,1.5 11,5 11,8 0,8" fill="#f4a45a"/></svg>
<div style="position:absolute;left:227px;top:364.38px;font-size:7.2px;line-height:7.2px;color:#555;font-weight:normal;white-space:nowrap;">Population</div>
<div style="position:absolute;left:228px;top:381.5px;width:12.5px;height:59px;background:linear-gradient(#c7223f,#f06a3f 40%,#f9b24f 70%,#fff1ad)"></div>
<div style="position:absolute;left:245px;top:376.88px;font-size:7.2px;line-height:7.2px;color:#555;font-weight:normal;white-space:nowrap;">&gt; 216,693</div>
<div style="position:absolute;left:245px;top:407.38px;font-size:7.2px;line-height:7.2px;color:#555;font-weight:normal;white-space:nowrap;">110,494</div>
<div style="position:absolute;left:245px;top:437.38px;font-size:7.2px;line-height:7.2px;color:#555;font-weight:normal;white-space:nowrap;">&lt; 4,295</div>
<div style="position:absolute;left:241px;top:380px;width:2px;height:1px;background:#999"></div>
<div style="position:absolute;left:241px;top:410.5px;width:2px;height:1px;background:#999"></div>
<div style="position:absolute;left:241px;top:440.5px;width:2px;height:1px;background:#999"></div>
<div style="position:absolute;left:0px;top:468.6px;width:960px;height:1.2px;background:#c4c4c4"></div>
<div style="position:absolute;left:0px;top:468.6px;width:21px;height:1.2px;background:#888"></div>
<div style="position:absolute;left:193px;top:468.6px;width:767px;height:1.2px;background:#999"></div>
</div>
</div>
<div style="position:absolute;left:4px;top:64px;width:696.6px;height:340px;background:#585858"></div>
<div style="position:absolute;left:6.4px;top:65.4px;width:960px;height:470px;transform:scale(0.722);transform-origin:0 0;overflow:hidden">
<div style="position:absolute;left:0;top:0;width:960px;height:470px;background:#fff;overflow:hidden">
<div style="position:absolute;left:2px;top:9.50px;font-size:8px;line-height:8px;color:#555;font-weight:normal;white-space:nowrap;">Home</div>
<svg style="position:absolute;left:26.5px;top:11px" width="6" height="4"><polyline points="0.5,0.5 3,3 5.5,0.5" fill="none" stroke="#999" stroke-width="0.8"/></svg>
<div style="position:absolute;left:40.5px;top:7.38px;font-size:10.5px;line-height:10.5px;color:#666;font-weight:normal;white-space:nowrap;">My Map</div>
<div style="position:absolute;left:863px;top:9.50px;font-size:8px;line-height:8px;color:#555;font-weight:normal;white-space:nowrap;">New Map</div>
<svg style="position:absolute;left:899px;top:11px" width="6" height="4"><polyline points="0.5,0.5 3,3 5.5,0.5" fill="none" stroke="#999" stroke-width="0.8"/></svg>
<div style="position:absolute;left:914px;top:8px;width:7.5px;height:9px;background:#eeeeee"></div>
<div style="position:absolute;left:924px;top:9.50px;font-size:8px;line-height:8px;color:#555;font-weight:normal;white-space:nowrap;">Wenjie</div>
<svg style="position:absolute;left:951px;top:11px" width="6" height="4"><polyline points="0.5,0.5 3,3 5.5,0.5" fill="none" stroke="#999" stroke-width="0.8"/></svg>
<div style="position:absolute;left:0;top:27px;width:960px;height:23px;background:#f7f7f7;border-bottom:1px solid #e2e2e2;box-sizing:border-box"></div>
<svg style="position:absolute;left:10px;top:34.5px" width="8" height="9" viewBox="0 0 8 9"><rect x="0.5" y="0.5" width="7" height="8" fill="#e3edf3" stroke="#8fa6b8" stroke-width="0.8"/><line x1="3" y1="1" x2="3" y2="8" stroke="#8fa6b8" stroke-width="0.6"/></svg>
<div style="position:absolute;left:20px;top:34.90px;font-size:8px;line-height:8px;color:#666;font-weight:normal;white-space:nowrap;transform:scaleX(0.9);transform-origin:0 0;">Details</div>
<svg style="position:absolute;left:51px;top:34.5px" width="9" height="9" viewBox="0 0 9 9"><rect x="0.5" y="3.5" width="8" height="5" fill="#e6d44e"/><polygon points="4.5,0.5 7,3.5 2,3.5" fill="#6a8a3a"/></svg>
<div style="position:absolute;left:60px;top:34.90px;font-size:8px;line-height:8px;color:#666;font-weight:normal;white-space:nowrap;">Add</div>
<svg style="position:absolute;left:78px;top:38px" width="5" height="3" viewBox="0 0 5 3"><polygon points="0,0 4,0 2,2.5" fill="#666"/></svg>
<div style="position:absolute;left:87px;top:34px;width:1px;height:10px;background:#bbb;border:none;box-sizing:border-box"></div>
<svg style="position:absolute;left:93px;top:34.5px" width="9" height="9" viewBox="0 0 9 9"><rect x="0.5" y="0.5" width="3.5" height="8" fill="#b8c4a8" stroke="#8a9488" stroke-width="0.6"/><rect x="5" y="0.5" width="3.5" height="8" fill="#aebccc" stroke="#8a9488" stroke-width="0.6"/></svg>
<div style="position:absolute;left:103px;top:34.90px;font-size:8px;line-height:8px;color:#666;font-weight:normal;white-space:nowrap;transform:scaleX(0.92);transform-origin:0 0;">Basemap</div>
<div style="position:absolute;left:138px;top:34px;width:1px;height:10px;background:#bbb;border:none;box-sizing:border-box"></div>
<svg style="position:absolute;left:143px;top:34.5px" width="8" height="9" viewBox="0 0 8 9"><rect x="0.5" y="0.5" width="7" height="8" fill="#a8cc98" stroke="#778" stroke-width="0.7"/><polyline points="1.5,7 3.5,4 5,5.5 7,2" fill="none" stroke="#3a6a9a" stroke-width="0.8"/></svg>
<div style="position:absolute;left:152px;top:34.90px;font-size:8px;line-height:8px;color:#666;font-weight:normal;white-space:nowrap;transform:scaleX(0.9);transform-origin:0 0;">Analysis</div>
<svg style="position:absolute;left:475.5px;top:35px" width="8" height="8" viewBox="0 0 8 8"><rect x="0.3" y="0.3" width="7.4" height="7.4" fill="#6468b0"/><rect x="2" y="0.3" width="4" height="2.5" fill="#e8e8f4"/><rect x="1.5" y="4.5" width="5" height="3" fill="#d8d8ea"/></svg>
<div style="position:absolute;left:485px;top:34.90px;font-size:8px;line-height:8px;color:#666;font-weight:normal;white-space:nowrap;transform:scaleX(0.92);transform-origin:0 0;">Save</div>
<svg style="position:absolute;left:503.5px;top:38px" width="5" height="3" viewBox="0 0 5 3"><polygon points="0,0 4,0 2,2.5" fill="#666"/></svg>
<svg style="position:absolute;left:516px;top:37px" width="9" height="4" viewBox="0 0 9 4"><rect x="0.4" y="0.4" width="4.5" height="3.2" rx="1.5" fill="none" stroke="#777" stroke-width="0.9"/><rect x="4" y="0.4" width="4.5" height="3.2" rx="1.5" fill="none" stroke="#777" stroke-width="0.9"/></svg>
<div style="position:absolute;left:528px;top:34.90px;font-size:8px;line-height:8px;color:#666;font-weight:normal;white-space:nowrap;transform:scaleX(0.92);transform-origin:0 0;">Share</div>
<svg style="position:absolute;left:554px;top:34.5px" width="9" height="9" viewBox="0 0 9 9"><rect x="2" y="0.5" width="5" height="3" fill="#fff" stroke="#888" stroke-width="0.7"/><rect x="0.5" y="3.5" width="8" height="3.5" fill="#ccc" stroke="#888" stroke-width="0.7"/><rect x="2" y="6" width="5" height="2.5" fill="#fff" stroke="#888" stroke-width="0.6"/></svg>
<div style="position:absolute;left:565px;top:34.90px;font-size:8px;line-height:8px;color:#666;font-weight:normal;white-space:nowrap;transform:scaleX(0.92);transform-origin:0 0;">Print</div>
<svg style="position:absolute;left:583px;top:38px" width="5" height="3" viewBox="0 0 5 3"><polygon points="0,0 4,0 2,2.5" fill="#666"/></svg>
<div style="position:absolute;left:592px;top:34px;width:1px;height:10px;background:#bbb;border:none;box-sizing:border-box"></div>
<svg style="position:absolute;left:598px;top:34px" width="9" height="9" viewBox="0 0 9 9"><polygon points="4.5,0.3 8.7,4.5 4.5,8.7 0.3,4.5" fill="#e8c84a" stroke="#b89a2a" stroke-width="0.5"/><polyline points="3,5.5 3,4 5.5,4" fill="none" stroke="#6a5a1a" stroke-width="0.7"/></svg>
<div style="position:absolute;left:609px;top:34.90px;font-size:8px;line-height:8px;color:#666;font-weight:normal;white-space:nowrap;transform:scaleX(0.93);transform-origin:0 0;">Directions</div>
<svg style="position:absolute;left:650px;top:34.5px" width="9" height="9" viewBox="0 0 9 9"><rect x="0.5" y="1" width="8" height="7" fill="#e8d08a" stroke="#b89a5a" stroke-width="0.6"/><rect x="0.5" y="4" width="8" height="1.5" fill="#8ab86a"/></svg>
<div style="position:absolute;left:662px;top:34.90px;font-size:8px;line-height:8px;color:#666;font-weight:normal;white-space:nowrap;transform:scaleX(0.93);transform-origin:0 0;">Measure</div>
<svg style="position:absolute;left:698px;top:34.5px" width="8" height="9" viewBox="0 0 8 9"><rect x="0.5" y="2.5" width="7" height="6" fill="#e8f0f8" stroke="#5a8ac0" stroke-width="0.8"/><rect x="3" y="0.5" width="2.5" height="5" fill="#5a8ac0"/></svg>
<div style="position:absolute;left:709px;top:34.90px;font-size:8px;line-height:8px;color:#666;font-weight:normal;white-space:nowrap;transform:scaleX(0.92);transform-origin:0 0;">Bookmarks</div>
<div style="position:absolute;left:753px;top:31.5px;width:201px;height:15px;background:#fff;border:1px solid #ddd;box-sizing:border-box"></div>
<div style="position:absolute;left:941px;top:31.5px;width:1px;height:15px;background:#ddd"></div>
<div style="position:absolute;left:755px;top:35.38px;font-size:7.2px;line-height:7.2px;color:#aaa;font-weight:normal;white-space:nowrap;">Find address or place</div>
<div style="position:absolute;left:944px;top:34.5px;width:6px;height:6px;border:1px solid #555;border-radius:50%;box-sizing:border-box"></div>
<div style="position:absolute;left:948.5px;top:40px;width:3px;height:1px;background:#555;transform:rotate(45deg)"></div>
<svg width="744" height="419" viewBox="930 50 744 419" style="position:absolute;left:216px;top:50px;display:block">
<defs><clipPath id="wiL"><polygon points="1191.0,134.0 1210.0,133.0 1224.0,131.0 1235.0,130.0 1244.0,126.0 1255.0,122.0 1258.0,130.0 1254.0,142.0 1264.0,143.0 1277.0,145.0 1281.0,146.0 1299.0,164.0 1326.0,171.0 1354.0,181.0 1383.0,190.0 1387.0,195.0 1395.0,198.0 1398.0,223.0 1403.0,226.0 1404.0,248.0 1400.0,258.0 1393.0,268.0 1388.0,275.0 1403.0,261.0 1415.0,251.0 1431.0,231.0 1434.0,226.0 1428.0,246.0 1421.0,256.0 1410.0,263.0 1408.0,281.0 1407.0,300.0 1408.0,314.0 1402.0,327.0 1394.0,346.0 1392.0,365.0 1397.0,390.0 1396.0,406.5 1264.0,406.5 1250.0,392.0 1240.0,368.0 1238.0,345.0 1234.0,330.0 1228.0,308.0 1217.0,296.0 1205.0,287.0 1189.0,277.0 1178.0,270.0 1168.0,258.0 1169.0,235.0 1170.0,220.0 1164.0,204.0 1176.0,188.0 1191.0,172.0"/></clipPath></defs>
<filter id="blL" x="-20%" y="-20%" width="140%" height="140%"><feGaussianBlur stdDeviation="10"/></filter>
<rect x="900" y="30" width="800" height="470" fill="#ebf1e2"/>
<polygon fill="#e7eedb" filter="url(#blL)" points="1530.0,40.0 1700.0,40.0 1700.0,172.0 1560.0,165.0 1550.0,145.0 1545.0,95.0 1530.0,70.0"/>
<polygon fill="#f6f6f4" filter="url(#blL)" points="880.0,20.0 1025.0,20.0 1015.0,110.0 1050.0,170.0 1110.0,220.0 1165.0,262.0 1230.0,300.0 1260.0,400.0 1440.0,410.0 1440.0,520.0 880.0,520.0"/>
<polygon fill="#f4f5f0" filter="url(#blL)" points="1430.0,350.0 1700.0,330.0 1700.0,520.0 1430.0,520.0"/>
<polygon fill="#dfe8d2" points="1195.0,50.0 1303.0,50.0 1285.0,57.0 1265.0,69.0 1248.0,80.0 1236.0,92.0 1215.0,99.0 1195.0,99.0"/>
<polygon fill="#dfe8d2" points="1159.0,63.0 1190.0,63.0 1190.0,79.0 1159.0,79.0"/>
<polygon fill="#dfe8d2" points="1072.0,59.0 1138.0,59.0 1138.0,95.0 1120.0,95.0 1120.0,118.0 1085.0,118.0 1085.0,95.0 1072.0,95.0"/>
<polygon fill="#e6e9dc" points="1018.0,83.0 1047.0,83.0 1047.0,118.0 1018.0,118.0"/>
<polygon fill="#dfe8d2" points="1183.0,95.0 1215.0,95.0 1215.0,116.0 1183.0,116.0"/>
<polygon fill="#d5e2c2" points="1333.0,50.0 1358.0,50.0 1356.0,56.0 1335.0,56.0"/>
<polygon fill="#dde6cf" points="1281.0,146.0 1290.0,140.0 1307.0,131.0 1331.0,120.0 1347.0,117.0 1362.0,122.0 1360.0,181.0 1354.0,181.0 1326.0,171.0 1299.0,164.0"/>
<polygon fill="#dfe8d2" points="1520.0,151.0 1542.0,151.0 1542.0,192.0 1520.0,185.0"/>
<polygon fill="#dfe8d2" points="1430.0,165.0 1462.0,165.0 1462.0,197.0 1448.0,205.0 1430.0,198.0"/>
<polygon fill="#dfe8d2" points="1527.0,55.0 1552.0,55.0 1552.0,95.0 1544.0,90.0 1527.0,70.0"/>
<polygon fill="#dfe8d2" points="1466.0,292.0 1500.0,288.0 1505.0,300.0 1498.0,320.0 1504.0,340.0 1496.0,357.0 1480.0,355.0 1468.0,338.0 1462.0,315.0"/>
<polygon fill="#e4ebd9" points="1518.0,253.0 1542.0,253.0 1542.0,278.0 1518.0,278.0"/>
<polygon fill="#dfe8d2" points="1542.0,259.0 1603.0,259.0 1603.0,293.0 1560.0,293.0 1542.0,285.0"/>
<polygon fill="#e8ecdf" points="1500.0,215.0 1520.0,215.0 1520.0,240.0 1500.0,240.0"/>
<ellipse cx="1148" cy="250" rx="17" ry="13" fill="#ece9df"/>
<polygon fill="#ece9df" points="1372.0,406.0 1397.0,406.0 1397.0,414.0 1401.0,431.0 1408.0,448.0 1416.0,460.0 1385.0,466.0 1368.0,450.0 1362.0,428.0"/>
<ellipse cx="1606" cy="416" rx="15" ry="14" fill="#ece9df"/>
<ellipse cx="1492" cy="378" rx="8" ry="6" fill="#ebeadf"/>
<ellipse cx="1543" cy="392" rx="8" ry="5" fill="#ebeadf"/>
<polyline fill="none" stroke="#cdcdcd" stroke-width="0.8" points="1000.0,344.0 1240.0,344.0"/>
<polyline fill="none" stroke="#cdcdcd" stroke-width="0.7" points="930.0,187.0 994.0,187.0"/>
<polyline fill="none" stroke="#d6d6d6" stroke-width="0.6" points="984.0,140.0 984.0,187.0"/>
<polyline fill="none" stroke="#d2d2d2" stroke-width="0.7" points="999.0,229.0 999.0,470.0"/>
<polyline fill="none" stroke="#dcdcdc" stroke-width="0.7" points="1000.0,334.7 1160.0,334.7 1190.0,333.0 1228.0,318.0"/>
<polyline fill="none" stroke="#cdcdcd" stroke-width="0.8" points="973.0,50.0 981.0,120.0 986.0,144.0 994.0,174.0 982.0,207.0 999.0,229.0"/>
<polyline fill="none" stroke="#dcdcdc" stroke-width="0.8" points="1007.0,140.0 1041.0,184.0 1098.0,207.0 1104.0,212.0 1130.0,235.0 1150.0,250.0 1220.0,270.0 1280.0,320.0 1340.0,370.0 1392.0,369.0"/>
<polyline fill="none" stroke="#dcdcdc" stroke-width="0.8" points="1144.0,260.0 1144.0,388.0 1133.0,395.0 1133.0,470.0"/>
<polyline fill="none" stroke="#dcdcdc" stroke-width="0.7" points="1198.0,130.0 1175.0,175.0 1160.0,220.0 1150.0,250.0"/>
<polyline fill="none" stroke="#dcdcdc" stroke-width="0.7" points="1130.0,456.0 1250.0,456.0"/>
<polyline fill="none" stroke="#c8c8c8" stroke-width="0.8" points="1264.0,406.0 1258.0,420.0 1255.0,440.0 1250.0,460.0 1247.0,470.0"/>
<polyline fill="none" stroke="#cccccc" stroke-width="0.7" points="1418.0,458.0 1418.0,470.0"/>
<polyline fill="none" stroke="#cccccc" stroke-width="0.7" points="1440.0,455.0 1600.0,455.0"/>
<polyline fill="none" stroke="#dcdcdc" stroke-width="0.7" points="1337.0,420.0 1400.0,444.0"/>
<polyline fill="none" stroke="#dcdcdc" stroke-width="0.7" points="1250.0,440.0 1300.0,430.0 1372.0,451.0"/>
<polyline fill="none" stroke="#dcdcdc" stroke-width="0.7" points="1416.0,458.0 1466.0,457.0 1540.0,440.0 1610.0,418.0"/>
<polyline fill="none" stroke="#dcdcdc" stroke-width="0.7" points="1490.0,377.0 1543.0,390.0 1606.0,416.0"/>
<polyline fill="none" stroke="#dcdcdc" stroke-width="0.6" points="984.0,124.0 1000.0,140.0"/>
<polyline fill="none" stroke="#dcdcdc" stroke-width="0.6" points="1004.0,402.0 1060.0,440.0 1128.0,456.0"/>
<polyline fill="none" stroke="#dcdcdc" stroke-width="0.6" points="1185.0,404.0 1213.0,420.0 1250.0,462.0"/>
<polyline fill="none" stroke="#dcdcdc" stroke-width="0.6" points="1536.0,199.0 1537.0,300.0 1543.0,390.0 1550.0,470.0"/>
<polyline fill="none" stroke="#dcdcdc" stroke-width="0.6" points="1490.0,377.0 1497.0,432.0 1500.0,470.0"/>
<polyline fill="none" stroke="#dcdcdc" stroke-width="0.6" points="1559.0,336.0 1584.0,374.0 1598.0,393.0"/>
<polyline fill="none" stroke="#dcdcdc" stroke-width="0.6" points="1180.0,311.0 1158.0,333.0"/>
<polyline fill="none" stroke="#dcdcdc" stroke-width="0.6" points="930.0,337.0 1000.0,334.7"/>
<polyline fill="none" stroke="#b3d3e8" stroke-width="0.7" points="984.0,211.0 1031.0,258.0 1082.0,278.0 1109.0,295.0 1130.0,270.0 1145.0,255.0"/>
<polyline fill="none" stroke="#b3d3e8" stroke-width="0.7" points="1095.0,167.0 1101.0,210.0 1132.0,228.0 1150.0,250.0 1170.0,262.0"/>
<polyline fill="none" stroke="#b3d3e8" stroke-width="0.7" points="1026.0,298.0 1057.0,320.0 1087.0,385.0 1114.0,430.0 1125.0,457.0 1130.0,470.0"/>
<polyline fill="none" stroke="#b3d3e8" stroke-width="0.7" points="1151.0,339.0 1182.0,377.0 1205.0,419.0 1235.0,449.0 1250.0,460.0"/>
<polyline fill="none" stroke="#b3d3e8" stroke-width="0.7" points="1172.0,150.0 1162.0,217.0 1165.0,250.0"/>
<polyline fill="none" stroke="#b3d3e8" stroke-width="0.7" points="1160.0,150.0 1150.0,190.0 1120.0,215.0"/>
<polygon fill="#ececea" points="954.0,184.0 994.0,184.0 994.0,241.0 975.0,241.0 954.0,215.0"/>
<polygon fill="#e0f3fd" points="1199.0,128.0 1212.0,121.0 1222.0,112.0 1238.0,96.0 1252.0,81.0 1272.0,67.0 1290.0,56.0 1305.0,49.0 1528.0,49.0 1527.0,70.0 1544.0,90.0 1536.0,112.0 1552.0,126.0 1547.0,140.0 1553.0,150.0 1541.0,145.0 1522.0,134.0 1500.0,135.0 1470.0,138.0 1440.0,140.0 1422.0,147.0 1413.0,137.0 1395.0,127.0 1380.0,120.0 1369.0,117.0 1380.0,103.0 1391.0,94.0 1399.0,85.0 1388.0,86.0 1374.0,92.0 1360.0,105.0 1347.0,117.0 1335.0,125.0 1324.0,131.0 1310.0,134.0 1297.0,137.0 1287.0,143.0 1277.0,145.0 1264.0,143.0 1254.0,142.0 1258.0,130.0 1255.0,122.0 1244.0,126.0 1235.0,130.0 1224.0,131.0 1210.0,133.0"/>
<polygon fill="#e0f3fd" points="1537.0,197.0 1531.0,185.0 1518.0,181.0 1506.0,179.0 1480.0,184.0 1466.0,185.0 1456.0,190.0 1448.0,205.0 1443.0,200.0 1436.0,188.0 1431.0,198.0 1423.0,213.0 1410.0,233.0 1404.0,248.0 1400.0,258.0 1393.0,268.0 1388.0,275.0 1403.0,261.0 1415.0,251.0 1431.0,231.0 1434.0,226.0 1428.0,246.0 1421.0,256.0 1410.0,263.0 1408.0,281.0 1407.0,300.0 1408.0,314.0 1402.0,327.0 1394.0,346.0 1392.0,365.0 1397.0,390.0 1396.0,406.0 1397.0,414.0 1401.0,431.0 1408.0,448.0 1416.0,458.0 1436.0,455.0 1452.0,442.0 1464.0,420.0 1467.0,400.0 1464.0,371.0 1457.0,336.0 1459.0,315.0 1462.0,300.0 1467.0,287.0 1471.0,272.0 1476.0,263.0 1491.0,250.0 1508.0,238.0 1522.0,220.0 1532.0,205.0"/>
<polygon fill="#e0f3fd" points="1527.0,202.0 1536.0,196.0 1550.0,192.0 1565.0,186.0 1580.0,188.0 1600.0,193.0 1630.0,200.0 1660.0,210.0 1680.0,212.0 1680.0,352.0 1674.0,352.0 1642.0,376.0 1639.0,344.0 1632.0,320.0 1625.0,310.0 1608.0,317.0 1588.0,330.0 1574.0,330.0 1576.0,322.0 1588.0,308.0 1601.0,288.0 1605.0,259.0 1603.0,245.0 1596.0,237.0 1578.0,214.0 1548.0,198.0"/>
<polygon fill="#e0f3fd" points="1553.0,152.0 1558.0,160.0 1567.0,163.0 1612.0,165.0 1659.0,170.0 1680.0,171.0 1680.0,178.0 1640.0,178.0 1600.0,176.0 1575.0,172.0 1562.0,168.0"/>
<polygon fill="#e0f3fd" points="1598.0,470.0 1603.0,443.0 1613.0,427.0 1637.0,431.0 1671.0,429.0 1680.0,428.0 1680.0,470.0"/>
<polygon fill="#e0f3fd" points="1623.0,404.0 1633.0,401.0 1643.0,405.0 1644.0,413.0 1634.0,417.0 1624.0,414.0"/>
<polygon fill="#e0f3fd" points="1051.0,49.0 1078.0,49.0 1077.0,56.0 1060.0,58.0 1052.0,55.0"/>
<polygon fill="#eef2e6" points="1572.0,171.0 1600.0,175.0 1640.0,177.0 1680.0,177.0 1680.0,212.0 1660.0,210.0 1630.0,200.0 1600.0,193.0 1580.0,188.0 1565.0,180.0"/>
<g clip-path="url(#wiL)">
<rect x="1150" y="110" width="300" height="310" fill="#ebfad1"/>
<rect x="1160" y="120" width="65.0" height="52.0" fill="#c8e3cb"/>
<rect x="1225" y="110" width="45.0" height="80.0" fill="#e6f7d0"/>
<rect x="1270" y="130" width="26.0" height="60.0" fill="#eaf9d0"/>
<rect x="1296" y="130" width="34.0" height="38.0" fill="#e8f8d0"/>
<rect x="1296" y="166" width="44.0" height="24.0" fill="#e1f4cf"/>
<rect x="1160" y="172" width="37.0" height="62.0" fill="#e1f4cf"/>
<rect x="1197" y="172" width="28.0" height="28.0" fill="#e7f7d0"/>
<rect x="1225" y="190" width="39.0" height="38.0" fill="#e9f9d0"/>
<rect x="1264" y="185" width="32.0" height="37.0" fill="#ebfad1"/>
<rect x="1293" y="188" width="46.0" height="29.0" fill="#def2cf"/>
<rect x="1339" y="180" width="28.0" height="45.0" fill="#e8f8d0"/>
<rect x="1367" y="190" width="33.0" height="60.0" fill="#cbe5cc"/>
<rect x="1197" y="200" width="26.0" height="29.0" fill="#cfe8cc"/>
<rect x="1223" y="205" width="32.0" height="24.0" fill="#e6f7d0"/>
<rect x="1255" y="222" width="38.0" height="20.0" fill="#eaf9d0"/>
<rect x="1293" y="217" width="29.0" height="23.0" fill="#e3f5cf"/>
<rect x="1322" y="217" width="18.0" height="29.0" fill="#e8f8d0"/>
<rect x="1340" y="225" width="16.0" height="16.0" fill="#e8f8d0"/>
<rect x="1356" y="222" width="21.0" height="46.0" fill="#dff2cf"/>
<rect x="1160" y="234" width="9.0" height="26.0" fill="#dff2cf"/>
<rect x="1168" y="234" width="29.0" height="23.0" fill="#b2d5c8"/>
<rect x="1160" y="257" width="40.0" height="33.0" fill="#dff2cf"/>
<rect x="1197" y="229" width="23.0" height="40.0" fill="#dff2cf"/>
<rect x="1219.7" y="228.8" width="33.1" height="28.4" fill="#c5e1cb"/>
<rect x="1219.7" y="257.2" width="33.1" height="16.8" fill="#99c2c2"/>
<rect x="1197" y="269" width="37.0" height="41.0" fill="#ebfad1"/>
<rect x="1234" y="274" width="19.0" height="34.0" fill="#e9f9d0"/>
<rect x="1252.8" y="245.8" width="28.2" height="39.8" fill="#e2f4cf"/>
<rect x="1253" y="285.6" width="28.0" height="16.4" fill="#e6f7d0"/>
<rect x="1281" y="239.5" width="49.5" height="28.9" fill="#719aae"/>
<rect x="1281" y="268.4" width="49.5" height="27.3" fill="#bfddca"/>
<rect x="1330.5" y="246" width="23.2" height="49.7" fill="#c7e3cb"/>
<rect x="1340.5" y="240.8" width="23.5" height="15.8" fill="#eefcd1"/>
<rect x="1353.7" y="256.6" width="24.8" height="17.4" fill="#e6f7d0"/>
<rect x="1353.4" y="273.7" width="25.1" height="22.9" fill="#577489"/>
<rect x="1377" y="268.4" width="20.3" height="27.3" fill="#495e74"/>
<rect x="1397" y="250" width="43.0" height="50.0" fill="#e1f4cf"/>
<rect x="1408" y="222" width="32.0" height="48.0" fill="#e7f7d0"/>
<rect x="1228" y="308.3" width="25.3" height="20.5" fill="#92bbbe"/>
<rect x="1253.3" y="302" width="27.7" height="26.8" fill="#dff2cf"/>
<rect x="1281" y="295.7" width="18.8" height="39.3" fill="#eaf9d0"/>
<rect x="1299.8" y="295.7" width="47.4" height="39.3" fill="#ebfad1"/>
<rect x="1347.2" y="296.6" width="21.4" height="21.4" fill="#5f7f94"/>
<rect x="1368.6" y="296.6" width="17.0" height="21.4" fill="#d6eccd"/>
<rect x="1385.6" y="292" width="34.4" height="26.0" fill="#a6cdc6"/>
<rect x="1347.2" y="318" width="34.0" height="17.0" fill="#9ec7c5"/>
<rect x="1381.2" y="318" width="38.8" height="23.4" fill="#90b9be"/>
<rect x="1220" y="328.8" width="45.8" height="17.0" fill="#e7f7d0"/>
<rect x="1265.8" y="328.8" width="16.1" height="11.7" fill="#e7f7d0"/>
<rect x="1265.8" y="340.5" width="16.1" height="19.5" fill="#edfbd1"/>
<rect x="1281.9" y="335" width="32.1" height="21.6" fill="#c8e3cb"/>
<rect x="1314" y="335" width="27.8" height="21.6" fill="#dff2cf"/>
<rect x="1341.8" y="335" width="26.8" height="28.0" fill="#b0d3c8"/>
<rect x="1368.6" y="341.4" width="15.2" height="21.6" fill="#769fb1"/>
<rect x="1383.8" y="341.4" width="36.2" height="21.6" fill="#aad0c7"/>
<rect x="1220" y="345.8" width="45.8" height="26.2" fill="#e9f9d0"/>
<rect x="1220" y="360" width="56.0" height="50.0" fill="#d2eacd"/>
<rect x="1276" y="356.6" width="27.3" height="28.4" fill="#eaf9d0"/>
<rect x="1276" y="385" width="27.0" height="25.0" fill="#e7f7d0"/>
<rect x="1303.3" y="356.6" width="37.7" height="27.7" fill="#4b6178"/>
<rect x="1303" y="384.3" width="22.0" height="25.7" fill="#e5f6d0"/>
<rect x="1325" y="384.3" width="26.0" height="25.7" fill="#64869b"/>
<rect x="1341" y="363" width="21.4" height="21.3" fill="#aed2c7"/>
<rect x="1351" y="384.3" width="22.5" height="25.7" fill="#a3cac6"/>
<rect x="1362.4" y="363" width="21.4" height="21.3" fill="#4a6177"/>
<rect x="1383.8" y="363" width="36.2" height="21.3" fill="#485d74"/>
<rect x="1373.5" y="384.3" width="46.5" height="11.7" fill="#526b81"/>
<rect x="1373.5" y="396" width="46.5" height="14.0" fill="#5f7f94"/>
</g>
<polyline fill="none" stroke="#a487b0" stroke-width="1" stroke-dasharray="4,1" points="1410.0,50.0 1530.0,123.0 1541.0,151.0 1566.0,170.0 1589.0,196.0 1638.0,226.0 1650.0,310.0 1646.0,350.0 1642.0,376.0 1632.0,400.0 1628.0,412.0 1612.0,425.0 1618.0,446.0 1640.0,457.0 1680.0,436.0"/>
<g font-family="Liberation Sans, sans-serif" font-size="6" fill="#3a3a3a" letter-spacing="0.15">
<text x="976" y="54">Grand Forks</text>
<text x="988" y="130">Fargo</text>
<text x="1104" y="208">St Cloud</text>
<text x="1063" y="237">Willmar</text>
<text x="1114" y="245">Minneapolis</text>
<text x="1147" y="259">St Paul</text>
<text x="968" y="251">Watertown</text>
<text x="1175" y="308">Rochester</text>
<text x="1121" y="332">Albert Lea</text>
<text x="1160" y="331">Austin</text>
<text x="1148" y="364">Mason City</text>
<text x="1004" y="404">Sioux City</text>
<text x="1186" y="401">Waterloo</text>
<text x="1099" y="458">Des Moines</text>
<text x="1215" y="418">Cedar Rapids</text>
<text x="1240" y="412">Dubuque</text>
<text x="1243" y="463">Davenport</text>
<text x="1199" y="128">Duluth</text>
<text x="1414" y="145">Marquette</text>
<text x="1632" y="154">Elliot Lake</text>
<text x="1404" y="327">Sheboygan</text>
<text x="1392" y="371">Milwaukee</text>
<text x="1398" y="391">Racine</text>
<text x="1395" y="419">Waukegan</text>
<text x="1405" y="442">Chicago</text>
<text x="1420" y="458">Gary</text>
<text x="1469" y="462">South Bend</text>
<text x="1374" y="449">Aurora</text>
<text x="1340" y="419">Rockford</text>
<text x="1560" y="334">Midland</text>
<text x="1493" y="375">Grand Rapids</text>
<text x="1585" y="372">Flint</text>
<text x="1545" y="388">Lansing</text>
<text x="1599" y="391">Waterford</text>
<text x="1555" y="411">Ann Arbor</text>
<text x="1595" y="414">Detroit</text>
<text x="1617" y="425">Windsor</text>
<text x="1466" y="421">Kalamazoo</text>
<text x="1500" y="429">Portage</text>
<text x="1650" y="380">Sarnia</text>
<text x="1655" y="409">Chatham</text>
<text x="1389" y="278">Green Bay</text>
</g>
<g fill="#fff" stroke="#666" stroke-width="0.6">
<circle cx="973" cy="54" r="1.3"/>
<circle cx="984" cy="124" r="1.3"/>
<circle cx="1101" cy="206" r="1.3"/>
<circle cx="1060" cy="235" r="1.3"/>
<circle cx="1143" cy="243" r="1.3"/>
<circle cx="1145" cy="253" r="1.3"/>
<circle cx="968" cy="253" r="1.3"/>
<circle cx="1180" cy="311" r="1.3"/>
<circle cx="1142" cy="334" r="1.3"/>
<circle cx="1158" cy="333" r="1.3"/>
<circle cx="1150" cy="366" r="1.3"/>
<circle cx="1001" cy="402" r="1.3"/>
<circle cx="1185" cy="404" r="1.3"/>
<circle cx="1126" cy="456" r="1.3"/>
<circle cx="1213" cy="420" r="1.3"/>
<circle cx="1264" cy="406" r="1.3"/>
<circle cx="1250" cy="462" r="1.3"/>
<circle cx="1198" cy="130" r="1.3"/>
<circle cx="1418" cy="147" r="1.3"/>
<circle cx="1630" cy="156" r="1.3"/>
<circle cx="1402" cy="325" r="1.3"/>
<circle cx="1392" cy="369" r="1.3"/>
<circle cx="1398" cy="389" r="1.3"/>
<circle cx="1395" cy="417" r="1.3"/>
<circle cx="1403" cy="444" r="1.3"/>
<circle cx="1417" cy="459" r="1.3"/>
<circle cx="1466" cy="457" r="1.3"/>
<circle cx="1372" cy="451" r="1.3"/>
<circle cx="1337" cy="420" r="1.3"/>
<circle cx="1559" cy="336" r="1.3"/>
<circle cx="1490" cy="377" r="1.3"/>
<circle cx="1584" cy="374" r="1.3"/>
<circle cx="1543" cy="390" r="1.3"/>
<circle cx="1598" cy="393" r="1.3"/>
<circle cx="1582" cy="413" r="1.3"/>
<circle cx="1613" cy="416" r="1.3"/>
<circle cx="1643" cy="373" r="1.3"/>
<circle cx="1497" cy="421" r="1.3"/>
<circle cx="1497" cy="432" r="1.3"/>
<circle cx="1653" cy="411" r="1.3"/>
<circle cx="1388" cy="275" r="1.3"/>
</g>
<g font-family="Liberation Sans, sans-serif" font-size="5.5" font-style="italic" fill="#6c9cc0">
<text x="1057" y="54">Lower</text>
<text x="1051" y="59.5">Red Lake</text>
<text x="1255" y="100">Lake</text>
<text x="1251" y="106">Superior</text>
<text x="1415" y="68">Lake</text>
<text x="1410" y="74">Superior</text>
<text x="1430" y="299">Lake</text>
<text x="1425" y="306">Michigan</text>
<text x="1657" y="272">Lake Hu</text>
</g>
<g font-family="Liberation Sans, sans-serif" font-size="4.8" fill="#5b6655">
<text x="1223" y="60">Superior</text>
<text x="1224" y="65">National</text>
<text x="1228" y="70">Forest</text>
<text x="1347" y="56">National</text>
<text x="1352" y="61">Park</text>
<text x="1187" y="104">Cloquet</text>
<text x="1185" y="109">Valley State</text>
<text x="1193" y="114">Forest</text>
<text x="1537" y="70">Lake</text>
<text x="1532" y="75">Superior</text>
<text x="1530" y="80">Provincial</text>
<text x="1538" y="85">Park</text>
<text x="1325" y="155">Ottawa</text>
<text x="1323" y="160">National</text>
<text x="1328" y="165">Forest</text>
<text x="1436" y="175">Hiawatha</text>
<text x="1434" y="180">National</text>
<text x="1440" y="185">Forest</text>
<text x="1573" y="268">Huron</text>
<text x="1570" y="273">National</text>
<text x="1576" y="278">Forest</text>
<text x="1472" y="320">Manistee</text>
<text x="1470" y="325">National</text>
<text x="1476" y="330">Forest</text>
<text x="1073" y="76">Buena</text>
<text x="1070" y="81">Vista State</text>
<text x="1076" y="86">Forest</text>
<text x="1105" y="72">Chippewa</text>
<text x="1105" y="77">National</text>
<text x="1110" y="82">Forest</text>
<text x="1085" y="90">Leech Lake</text>
<text x="1083" y="95">Reservation</text>
<text x="1020" y="98">White</text>
<text x="1022" y="103">Earth</text>
<text x="1015" y="108">Reservation</text>
<text x="963" y="193">Lake</text>
<text x="960" y="198">Traverse</text>
<text x="957" y="203">Reservation</text>
<text x="1120" y="55">State Forest</text>
<text x="1555" y="135">Sault</text>
<text x="1555" y="140">Ste</text>
<text x="1555" y="146">Marie</text>
<text x="1541" y="155">Sault Ste</text>
<text x="1543" y="161">Marie</text>
</g>
<g font-family="Liberation Sans, sans-serif" font-size="5.5" fill="#9a9a9a" letter-spacing="0.6">
<text x="1083" y="115">MINNESOTA</text>
<text x="1113" y="422">IOWA</text>
<text x="1335" y="457">ILLINOIS</text>
<text x="1522" y="352">MICHIGAN</text>
<text x="948" y="270">PLATEAU DU</text>
<text x="948" y="278">COTEAU DES</text>
<text x="955" y="286">PRAIRIES</text>
</g>
<text x="1521" y="462" font-family="Liberation Sans, sans-serif" font-size="4.6" fill="#555">Esri, HERE, Garmin, FAO, NOAA, USGS, EPA, NPS</text>
<text x="1640.5" y="462.5" font-family="Liberation Sans, sans-serif" font-size="19" fill="#555" opacity="0.55" transform="translate(0.8,0.8)" letter-spacing="-0.5">esri</text>
<text x="1640.5" y="462.5" font-family="Liberation Sans, sans-serif" font-size="19" fill="#fff" stroke="#888" stroke-width="0.4" letter-spacing="-0.5">esri</text>
<text x="1648" y="446" font-family="Liberation Sans, sans-serif" font-size="3.5" fill="#fff" stroke="#999" stroke-width="0.25">powered by</text>
</svg>
<svg style="position:absolute;left:951px;top:52px" width="8" height="8"><path d="M1 7 L7 1 M4 1 H7 V4 M1 4 V7 H4" fill="none" stroke="#555" stroke-width="0.8"/></svg>
<div style="position:absolute;left:0;top:50px;width:216px;height:419px;background:#fff;border-left:1px solid #e6e6e6;border-right:1px solid #d6d6d6;box-sizing:border-box"></div>
<div style="position:absolute;left:3.7000000000000455px;top:57.35px;font-size:9px;line-height:9px;color:#555;font-weight:normal;white-space:nowrap;transform:scaleX(0.92);transform-origin:0 0;">Change Style</div>
<div style="position:absolute;left:3.7000000000000455px;top:71.75px;font-size:9px;line-height:9px;color:#555;font-weight:normal;white-space:nowrap;transform:scaleX(0.91);transform-origin:0 0;">Join Features to WI Counties</div>
<svg style="position:absolute;left:205px;top:56px" width="5" height="8"><polygon points="4,0 0,4 4,8" fill="#777"/></svg>
<div style="position:absolute;left:3px;top:84px;width:207px;height:1px;background:#ccc"></div>
<div style="position:absolute;left:3.7000000000000455px;top:91.03px;font-size:7.5px;line-height:7.5px;color:#4a4a4a;font-weight:bold;white-space:nowrap;transform:scaleX(0.92);transform-origin:0 0;">Population</div>
<div style="position:absolute;left:5px;top:112.33px;font-size:7.5px;line-height:7.5px;color:#555;font-weight:normal;white-space:nowrap;">Divided By:</div>
<div style="position:absolute;left:5px;top:126.82px;font-size:7.5px;line-height:7.5px;color:#555;font-weight:normal;white-space:nowrap;">Theme</div>
<div style="position:absolute;left:45.39999999999998px;top:109px;width:152px;height:13px;border:1px solid #ddd;box-sizing:border-box;background:#fff"></div>
<div style="position:absolute;left:186.70000000000005px;top:110px;width:1px;height:11px;background:#e2e2e2"></div>
<div style="position:absolute;left:47px;top:112.39px;font-size:7.3px;line-height:7.3px;color:#444;font-weight:normal;white-space:nowrap;">None</div>
<svg style="position:absolute;left:190px;top:114.5px" width="5" height="3"><polygon points="0,0 4,0 2,3" fill="#666"/></svg>
<div style="position:absolute;left:45.39999999999998px;top:124.5px;width:152px;height:13px;border:1px solid #ddd;box-sizing:border-box;background:#fff"></div>
<div style="position:absolute;left:186.70000000000005px;top:125.5px;width:1px;height:11px;background:#e2e2e2"></div>
<div style="position:absolute;left:47px;top:127.89px;font-size:7.3px;line-height:7.3px;color:#444;font-weight:normal;white-space:nowrap;">High to Low</div>
<svg style="position:absolute;left:190px;top:130.0px" width="5" height="3"><polygon points="0,0 4,0 2,3" fill="#666"/></svg>
<div style="position:absolute;left:203px;top:107px;width:8px;height:327px;background:#f1f1f1"></div>
<div style="position:absolute;left:204px;top:116px;width:6px;height:294px;background:#c1c1c1"></div>
<svg style="position:absolute;left:205px;top:109.5px" width="5" height="3"><polygon points="0,3 4,3 2,0" fill="#888"/></svg>
<svg style="position:absolute;left:205px;top:427px" width="5" height="3"><polygon points="0,0 4,0 2,3" fill="#333"/></svg>
<div style="position:absolute;left:42px;top:146.74px;font-size:5.6px;line-height:5.6px;color:#333;font-weight:normal;white-space:nowrap;">945,726</div>
<svg style="position:absolute;left:41px;top:155px" width="60" height="115" viewBox="755 155 60 115">
<defs><linearGradient id="cgteal" x1="0" y1="0" x2="0" y2="1"><stop offset="0" stop-color="#2a3e52"/><stop offset="0.3" stop-color="#4d7488"/><stop offset="0.6" stop-color="#86aeb6"/><stop offset="0.85" stop-color="#c9dcc0"/><stop offset="1" stop-color="#eef4d0"/></linearGradient></defs>
<line x1="761.3" y1="159.5" x2="761.3" y2="263.5" stroke="#666" stroke-width="0.8"/>
<rect x="763.8" y="160.5" width="12.9" height="78" fill="#1b2d3f"/>
<rect x="763.8" y="238.4" width="12.9" height="22.4" fill="url(#cgteal)"/>
<polygon points="776.7,241 779,241 779,246 781.5,246 781.5,251.5 783.5,251.5 783.5,256 803,256 803,260.7 776.7,260.7" fill="#b4b4b4"/>
<line x1="783.5" y1="252.7" x2="805" y2="252.7" stroke="#c8c8c8" stroke-width="0.8"/>
<line x1="766" y1="238.4" x2="779.4" y2="238.4" stroke="#7a2a2a" stroke-width="0.6"/>
<line x1="766" y1="260.5" x2="779.4" y2="260.5" stroke="#555" stroke-width="0.6"/>
<polygon points="759.2,235.5 765,235.5 767.2,238.4 765,241.4 759.2,241.4" fill="#1a1a1a"/>
<polygon points="759.2,258.2 765,258.2 767.2,261 765,263.7 759.2,263.7" fill="#1a1a1a"/>
</svg>
<div style="position:absolute;left:93px;top:248.97px;font-size:6.5px;line-height:6.5px;color:#888;font-weight:normal;white-space:nowrap;font-style:italic">x&#772;</div>
<div style="position:absolute;left:21px;top:235.74px;font-size:5.6px;line-height:5.6px;color:#333;font-weight:normal;white-space:nowrap;">216,693</div>
<div style="position:absolute;left:26px;top:257.74px;font-size:5.6px;line-height:5.6px;color:#333;font-weight:normal;white-space:nowrap;">4,295</div>
<div style="position:absolute;left:46px;top:271.24px;font-size:5.6px;line-height:5.6px;color:#333;font-weight:normal;white-space:nowrap;">4,295</div>
<div style="position:absolute;left:183.39999999999998px;top:149.5px;width:5px;height:13.5px;background:linear-gradient(#8a2a20,#d06030 50%,#f8c070)"></div>
<div style="position:absolute;left:172.39999999999998px;top:167.93px;font-size:7.5px;line-height:7.5px;color:#4e86a3;font-weight:normal;white-space:nowrap;">Symbols</div>
<svg style="position:absolute;left:181px;top:183.5px" width="10" height="10" viewBox="0 0 10 10"><path d="M8.5 4 A3.6 3.6 0 0 0 1.8 3.2 M1.5 6 A3.6 3.6 0 0 0 8.2 6.8" fill="none" stroke="#333" stroke-width="1.3"/><polygon points="0.5,1.5 3.8,3.6 0.6,4.8" fill="#333"/><polygon points="9.5,8.5 6.2,6.4 9.4,5.2" fill="#333"/></svg>
<div style="position:absolute;left:177px;top:196.32px;font-size:7.5px;line-height:7.5px;color:#4e86a3;font-weight:normal;white-space:nowrap;">Invert</div>
<svg style="position:absolute;left:181.5px;top:212px" width="10" height="10" viewBox="0 0 10 10"><circle cx="4" cy="4" r="2.8" fill="none" stroke="#333" stroke-width="1.2"/><line x1="6" y1="6" x2="9" y2="9" stroke="#333" stroke-width="1.6"/><rect x="0.5" y="8" width="5" height="1.5" fill="#aaa"/></svg>
<div style="position:absolute;left:172.79999999999995px;top:226.32px;font-size:7.5px;line-height:7.5px;color:#4e86a3;font-weight:normal;white-space:nowrap;">Zoom in</div>
<div style="position:absolute;left:4.2999999999999545px;top:297.40000000000003px;width:6px;height:6px;border:1px solid #888;box-sizing:border-box;background:#fff"></div>
<div style="position:absolute;left:14px;top:296.62px;font-size:7.5px;line-height:7.5px;color:#555;font-weight:normal;white-space:nowrap;transform:scaleX(0.94);transform-origin:0 0;">Classify Data</div>
<div style="position:absolute;left:4.2999999999999545px;top:308.6px;width:6px;height:6px;border:1px solid #888;box-sizing:border-box;background:#fff"></div>
<div style="position:absolute;left:14px;top:307.82px;font-size:7.5px;line-height:7.5px;color:#555;font-weight:normal;white-space:nowrap;transform:scaleX(0.94);transform-origin:0 0;">Draw features with no value.</div>
<div style="position:absolute;left:4.2999999999999545px;top:320.40000000000003px;width:6px;height:6px;border:1px solid #888;box-sizing:border-box;background:#fff"></div>
<svg style="position:absolute;left:4.2999999999999545px;top:320.40000000000003px" width="6" height="6"><polyline points="1.2,3 2.5,4.5 4.8,1.2" fill="none" stroke="#222" stroke-width="1"/></svg>
<div style="position:absolute;left:14px;top:319.62px;font-size:7.5px;line-height:7.5px;color:#555;font-weight:normal;white-space:nowrap;">Show in legend</div>
<div style="position:absolute;left:4px;top:335.62px;font-size:7.5px;line-height:7.5px;color:#4a4a4a;font-weight:bold;white-space:nowrap;transform:scaleX(0.87);transform-origin:0 0;">Transparency</div>
<div style="position:absolute;left:9px;top:349.02px;font-size:7.5px;line-height:7.5px;color:#aaa;font-weight:normal;white-space:nowrap;">Overall</div>
<div style="position:absolute;left:15.700000000000045px;top:364px;width:181px;height:2.5px;background:#d8d8d8;border-bottom:0.5px solid #bbb"></div>
<div style="position:absolute;left:15.700000000000045px;top:363.5px;width:4px;height:3px;background:#888"></div>
<div style="position:absolute;left:192.5px;top:363.5px;width:4px;height:3px;background:#888"></div>
<div style="position:absolute;left:52px;top:361.5px;width:4px;height:6px;background:#fff;border:0.8px solid #999;border-radius:0 0 2px 2px;box-sizing:border-box"></div>
<div style="position:absolute;left:16px;top:367px;width:0.6px;height:2px;background:#666"></div>
<div style="position:absolute;left:62px;top:367px;width:0.6px;height:2px;background:#666"></div>
<div style="position:absolute;left:106px;top:367px;width:0.6px;height:2px;background:#666"></div>
<div style="position:absolute;left:151px;top:367px;width:0.6px;height:2px;background:#666"></div>
<div style="position:absolute;left:195px;top:367px;width:0.6px;height:2px;background:#666"></div>
<div style="position:absolute;left:16px;top:370.13px;font-size:6.2px;line-height:6.2px;color:#555;font-weight:normal;white-space:nowrap;">0%</div>
<div style="position:absolute;left:98.5px;top:370.13px;font-size:6.2px;line-height:6.2px;color:#555;font-weight:normal;white-space:nowrap;">50%</div>
<div style="position:absolute;left:183px;top:370.13px;font-size:6.2px;line-height:6.2px;color:#555;font-weight:normal;white-space:nowrap;">100%</div>
<div style="position:absolute;left:9px;top:382.62px;font-size:7.5px;line-height:7.5px;color:#aaa;font-weight:normal;white-space:nowrap;">Per feature</div>
<div style="position:absolute;left:17px;top:396.12px;font-size:7.5px;line-height:7.5px;color:#555;font-weight:normal;white-space:nowrap;">Set from <span style="color:#3f7aa8">Attribute Values</span></div>
<div style="position:absolute;left:3.6000000000000227px;top:414.32px;font-size:7.5px;line-height:7.5px;color:#4a4a4a;font-weight:bold;white-space:nowrap;transform:scaleX(0.82);transform-origin:0 0;">Visible Range</div>
<div style="position:absolute;left:173.70000000000005px;top:414.32px;font-size:7.5px;line-height:7.5px;color:#4e86a3;font-weight:normal;white-space:nowrap;">Suggest</div>
<div style="position:absolute;left:9px;top:427.2px;width:188px;height:2px;background:#d2d2d2;border-top:0.5px solid #aaa;border-bottom:0.5px solid #ccc"></div>
<div style="position:absolute;left:10px;top:424.5px;width:5px;height:6px;background:#fff;border:0.8px solid #888;border-radius:2px;box-sizing:border-box"></div>
<div style="position:absolute;left:191px;top:424.5px;width:5px;height:6px;background:#fff;border:0.8px solid #888;border-radius:2px;box-sizing:border-box"></div>
<svg style="position:absolute;left:53.5px;top:423px" width="6" height="5"><polygon points="0,0 5.5,0 2.75,4.5" fill="#111"/></svg>
<div style="position:absolute;left:65.29999999999995px;top:436.4px;width:29.2px;height:16.5px;background:#5aa6d8;color:#fff;font-size:7.5px;font-weight:bold;line-height:16.5px;text-align:center;letter-spacing:0.3px">OK</div>
<div style="position:absolute;left:108.20000000000005px;top:440.93px;font-size:7.5px;line-height:7.5px;color:#4a88b0;font-weight:normal;white-space:nowrap;letter-spacing:0.3px">CANCEL</div>
<div style="position:absolute;left:2px;top:456px;width:208px;height:1px;background:#e6e6e6"></div>
<div style="position:absolute;left:11px;top:459.92px;font-size:4.8px;line-height:4.8px;color:#555;font-weight:normal;white-space:nowrap;">Trust Center</div>
<div style="position:absolute;left:49px;top:459.92px;font-size:4.8px;line-height:4.8px;color:#555;font-weight:normal;white-space:nowrap;">Contact Esri</div>
<div style="position:absolute;left:87px;top:459.92px;font-size:4.8px;line-height:4.8px;color:#555;font-weight:normal;white-space:nowrap;">Report Abuse</div>
<div style="position:absolute;left:128px;top:459.92px;font-size:4.8px;line-height:4.8px;color:#555;font-weight:normal;white-space:nowrap;">Contact Us</div>
<div style="position:absolute;left:227.5px;top:61px;width:15px;height:46px;background:#fff;border:1px solid #777;border-radius:2px;box-sizing:border-box"></div>
<div style="position:absolute;left:227.5px;top:76px;width:15px;height:1px;background:#999"></div>
<div style="position:absolute;left:227.5px;top:92px;width:15px;height:1px;background:#999"></div>
<div style="position:absolute;left:231px;top:68.5px;width:8px;height:1.2px;background:#333"></div>
<div style="position:absolute;left:234.39999999999998px;top:65px;width:1.2px;height:8px;background:#333"></div>
<div style="position:absolute;left:231px;top:99.5px;width:8px;height:1.2px;background:#333"></div>
<svg style="position:absolute;left:229.5px;top:78.5px" width="11" height="11" viewBox="0 0 11 11"><path d="M1 5.8 L5.5 1.5 L10 5.8 M2.6 4.5 V9.8 H8.4 V4.5 M4.6 9.8 V7 H6.4 V9.8 M7.8 2.5 V4.2" fill="none" stroke="#444" stroke-width="0.85"/></svg>
<div style="position:absolute;left:227.5px;top:111.5px;width:15px;height:15px;background:#fff;border:1px solid #777;border-radius:2px;box-sizing:border-box"></div>
<svg style="position:absolute;left:229.5px;top:113.5px" width="11" height="11" viewBox="0 0 11 11"><circle cx="5.5" cy="5.5" r="3.9" fill="none" stroke="#333" stroke-width="1.1"/><path d="M5.5 0.6 V2.2 M5.5 8.8 V10.4 M0.6 5.5 H2.2 M8.8 5.5 H10.4" stroke="#333" stroke-width="1"/></svg>
<div style="position:absolute;left:220px;top:330.5px;width:72px;height:133px;background:#fff;border:1px solid #9a9a9a;border-radius:3px;box-sizing:border-box"></div>
<svg style="position:absolute;left:229px;top:346.5px" width="12" height="8"><polygon points="0,0 6,1.5 11,5 11,8 0,8" fill="#5a9aa6"/></svg>
<div style="position:absolute;left:227px;top:364.38px;font-size:7.2px;line-height:7.2px;color:#555;font-weight:normal;white-space:nowrap;">Population</div>
<div style="position:absolute;left:228px;top:381.5px;width:12.5px;height:59px;background:linear-gradient(#1d3447,#5f9aa6 45%,#b9d3bd 75%,#eef0c6)"></div>
<div style="position:absolute;left:245px;top:376.88px;font-size:7.2px;line-height:7.2px;color:#555;font-weight:normal;white-space:nowrap;">&gt; 216,693</div>
<div style="position:absolute;left:245px;top:407.38px;font-size:7.2px;line-height:7.2px;color:#555;font-weight:normal;white-space:nowrap;">110,494</div>
<div style="position:absolute;left:245px;top:437.38px;font-size:7.2px;line-height:7.2px;color:#555;font-weight:normal;white-space:nowrap;">&lt; 4,295</div>
<div style="position:absolute;left:241px;top:380px;width:2px;height:1px;background:#999"></div>
<div style="position:absolute;left:241px;top:410.5px;width:2px;height:1px;background:#999"></div>
<div style="position:absolute;left:241px;top:440.5px;width:2px;height:1px;background:#999"></div>
<div style="position:absolute;left:0px;top:468.6px;width:960px;height:1.2px;background:#c4c4c4"></div>
<div style="position:absolute;left:0px;top:468.6px;width:21px;height:1.2px;background:#888"></div>
<div style="position:absolute;left:193px;top:468.6px;width:767px;height:1.2px;background:#999"></div>
</div>
<div style="position:absolute;left:0;top:0;width:960px;height:470px;background:rgba(0,0,0,0.655)"></div>
</div>
<div style="position:absolute;left:165px;top:104px;width:140px;height:176px;background:#fff"></div>
<svg style="position:absolute;left:294.5px;top:108px" width="5" height="5"><path d="M0.3 0.3 L4.7 4.7 M4.7 0.3 L0.3 4.7" stroke="#888" stroke-width="0.7"/></svg>
<svg style="position:absolute;left:217.2px;top:120px" width="8" height="7.5"><polygon points="0,0 3,0.8 7.5,4.5 7.5,7.2 0,7.2" fill="#5b97aa"/></svg>
<div style="position:absolute;left:179px;top:135.4px;width:17.6px;height:8.6px;background:#d6e9f5"></div>
<div style="position:absolute;left:182.5px;top:137.75px;font-size:5px;line-height:5px;color:#4a7aa0;font-weight:normal;white-space:nowrap;">FILL</div>
<div style="position:absolute;left:203px;top:137.75px;font-size:5px;line-height:5px;color:#555;font-weight:normal;white-space:nowrap;transform:scaleX(0.9);transform-origin:0 0;">OUTLINE</div>
<div style="position:absolute;left:178.5px;top:149px;width:7px;height:65px;background:linear-gradient(#1e3a4f,#3f6a80 35%,#8fb2b4 65%,#eef0c8)"></div>
<svg style="position:absolute;left:178.5px;top:216.5px" width="8" height="8" viewBox="0 0 10 10"><path d="M8.5 4 A3.6 3.6 0 0 0 1.8 3.2 M1.5 6 A3.6 3.6 0 0 0 8.2 6.8" fill="none" stroke="#444" stroke-width="1.2"/><polygon points="0.5,1.5 3.8,3.6 0.6,4.8" fill="#444"/><polygon points="9.5,8.5 6.2,6.4 9.4,5.2" fill="#444"/></svg>
<div style="position:absolute;left:192.3px;top:149.2px;width:7px;height:25.6px;background:linear-gradient(#1e3a4f,#4f8a9a 50%,#e8f0d8)"></div>
<div style="position:absolute;left:203.3px;top:149.2px;width:7px;height:25.6px;background:linear-gradient(#5a1a5a,#b04a9a 50%,#f0e0f0)"></div>
<div style="position:absolute;left:214.3px;top:149.2px;width:7px;height:25.6px;background:linear-gradient(#2a1a5a,#6a4ab0 50%,#e8e0f8)"></div>
<div style="position:absolute;left:225px;top:149.2px;width:7px;height:25.6px;background:linear-gradient(#5a1030,#c04060 50%,#f8e0e8)"></div>
<div style="position:absolute;left:236px;top:149.2px;width:7px;height:25.6px;background:linear-gradient(#7a2008,#e06030 50%,#fde8c8)"></div>
<div style="position:absolute;left:246.6px;top:149.2px;width:7px;height:25.6px;background:linear-gradient(#3a8a70,#90d090 50%,#f0f8c8)"></div>
<div style="position:absolute;left:192.3px;top:176.7px;width:7px;height:25.6px;background:linear-gradient(#4a7a10,#a8c070 50%,#e0e0e0)"></div>
<div style="position:absolute;left:203.3px;top:176.7px;width:7px;height:25.6px;background:linear-gradient(#1a6a9a,#6ab0c8 50%,#e0e0e0)"></div>
<div style="position:absolute;left:214.3px;top:176.7px;width:7px;height:25.6px;background:linear-gradient(#9a4a10,#d09060 50%,#e0e0e0)"></div>
<div style="position:absolute;left:225px;top:176.7px;width:7px;height:25.6px;background:linear-gradient(#3a6a90,#90b0b8 50%,#e8d8b0)"></div>
<div style="position:absolute;left:236px;top:176.7px;width:7px;height:25.6px;background:linear-gradient(#f8a090,#e04838 45%,#902020)"></div>
<div style="position:absolute;left:246.6px;top:176.7px;width:7px;height:25.6px;background:linear-gradient(#c0a8f0,#7858b0 50%,#403060)"></div>
<div style="position:absolute;left:192.3px;top:203.5px;width:7px;height:19.7px;background:linear-gradient(#c0e8c8,#50b070 50%,#208050)"></div>
<div style="position:absolute;left:203.3px;top:203.5px;width:7px;height:19.7px;background:linear-gradient(#f8e0a8,#d09040 50%,#905010)"></div>
<div style="position:absolute;left:214.3px;top:203.5px;width:7px;height:19.7px;background:linear-gradient(#f8c0e0,#e04090 50%,#901050)"></div>
<div style="position:absolute;left:225px;top:203.5px;width:7px;height:19.7px;background:linear-gradient(#e0d0f8,#9080e0 50%,#4030a0)"></div>
<div style="position:absolute;left:236px;top:203.5px;width:7px;height:19.7px;background:linear-gradient(#c8e0f8,#5090e0 50%,#2050a0)"></div>
<div style="position:absolute;left:246.6px;top:203.5px;width:7px;height:19.7px;background:linear-gradient(#d0f0c0,#70c070 50%,#308040)"></div>
<div style="position:absolute;left:256.5px;top:149px;width:6px;height:74px;background:#f3f3f3"></div>
<div style="position:absolute;left:257.5px;top:155px;width:4px;height:25.7px;background:#c6c6c6"></div>
<div style="position:absolute;left:178px;top:228.75px;font-size:5px;line-height:5px;color:#444;font-weight:normal;white-space:nowrap;">Transparency</div>
<div style="position:absolute;left:178.5px;top:236px;width:86px;height:1.5px;background:#ccc"></div>
<div style="position:absolute;left:178.5px;top:234.5px;width:3px;height:4px;background:#fff;border:0.6px solid #888;box-sizing:border-box"></div>
<div style="position:absolute;left:261px;top:235.5px;width:3px;height:2.5px;background:#666"></div>
<div style="position:absolute;left:178px;top:240.22px;font-size:4.8px;line-height:4.8px;color:#555;font-weight:normal;white-space:nowrap;">0%</div>
<div style="position:absolute;left:214px;top:240.22px;font-size:4.8px;line-height:4.8px;color:#555;font-weight:normal;white-space:nowrap;">50%</div>
<div style="position:absolute;left:256px;top:240.22px;font-size:4.8px;line-height:4.8px;color:#555;font-weight:normal;white-space:nowrap;">100%</div>
<div style="position:absolute;left:237.6px;top:259.4px;width:20.8px;height:11px;background:#5aaee0;color:#fff;font-size:5.5px;line-height:11px;text-align:center">OK</div>
<div style="position:absolute;left:268.3px;top:262.32px;font-size:5.5px;line-height:5.5px;color:#4a88b0;font-weight:normal;white-space:nowrap;letter-spacing:0.4px">CANCEL</div>
<div style="position:absolute;left:711px;top:468.6px;width:3px;height:1.2px;background:#888"></div>
</body></html>
